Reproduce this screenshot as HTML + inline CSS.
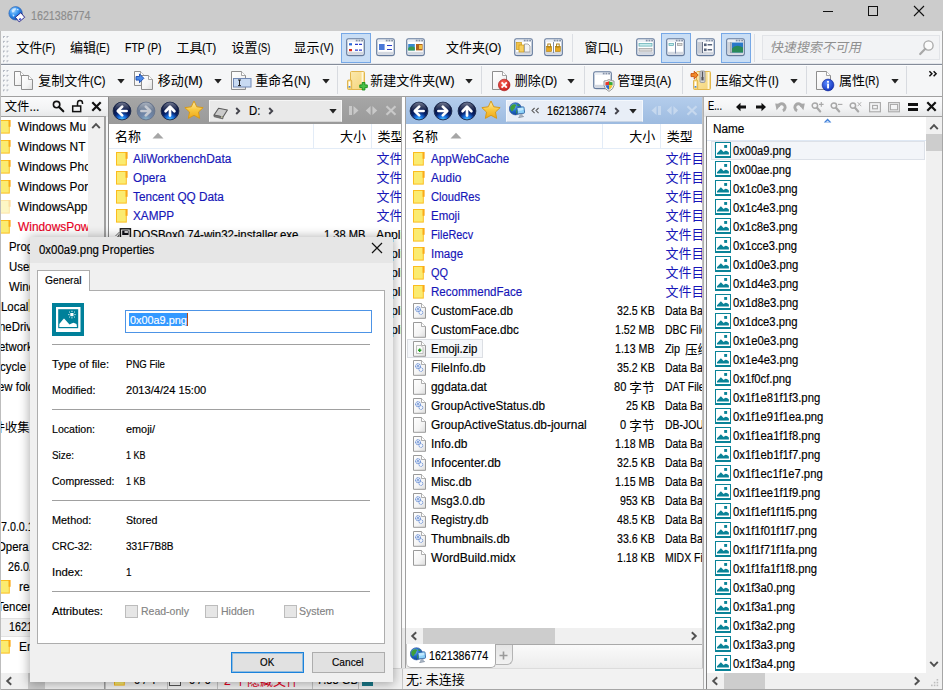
<!DOCTYPE html>
<html><head><meta charset="utf-8"><title>1621386774</title>
<style>
html,body{margin:0;padding:0;background:#fff;}
body{width:943px;height:690px;overflow:hidden;position:relative;font-family:"Liberation Sans",sans-serif;}
.a{position:absolute;}
.t{position:absolute;white-space:nowrap;transform-origin:0 0;line-height:normal;display:block;-webkit-text-stroke:0.16px currentColor;}
.g{font-family:"Liberation Sans","Noto Sans CJK SC",sans-serif;}
#root{position:absolute;left:0;top:0;width:943px;height:690px;overflow:hidden;background:#fff;}
</style></head><body>
<div id="root">
<svg width="0" height="0" style="position:absolute"><defs>
<radialGradient id="nb" cx="50%" cy="100%" r="75%"><stop offset="0" stop-color="#5ad2ff"/><stop offset="0.3" stop-color="#1872e4"/><stop offset="0.6" stop-color="#08226a"/><stop offset="1" stop-color="#06123c"/></radialGradient>
<radialGradient id="nbd" cx="50%" cy="100%" r="75%"><stop offset="0" stop-color="#8cb8cc"/><stop offset="0.4" stop-color="#7088ac"/><stop offset="1" stop-color="#69788f"/></radialGradient>
<linearGradient id="gl" x1="0" y1="0" x2="0" y2="1"><stop offset="0" stop-color="#fff" stop-opacity="0.55"/><stop offset="1" stop-color="#fff" stop-opacity="0.05"/></linearGradient>
<linearGradient id="star" x1="0" y1="0" x2="0" y2="1"><stop offset="0" stop-color="#fff0b0"/><stop offset="0.5" stop-color="#f8c840"/><stop offset="1" stop-color="#f0a818"/></linearGradient>
<linearGradient id="pg" x1="0" y1="0" x2="1" y2="1"><stop offset="0" stop-color="#ffffff"/><stop offset="0.6" stop-color="#f4f4f4"/><stop offset="1" stop-color="#dcdcdc"/></linearGradient>
<linearGradient id="fold" x1="0" y1="0" x2="1" y2="1"><stop offset="0" stop-color="#fbe9ae"/><stop offset="1" stop-color="#f5d478"/></linearGradient>
<radialGradient id="globe" cx="35%" cy="30%" r="75%"><stop offset="0" stop-color="#9fd4ff"/><stop offset="0.5" stop-color="#2f8ff0"/><stop offset="1" stop-color="#1450b0"/></radialGradient>
<radialGradient id="globe2" cx="35%" cy="30%" r="80%"><stop offset="0" stop-color="#79b8f4"/><stop offset="0.5" stop-color="#1f68c8"/><stop offset="1" stop-color="#0c3c8c"/></radialGradient>
<radialGradient id="redb" cx="40%" cy="35%" r="70%"><stop offset="0" stop-color="#ff6a5a"/><stop offset="1" stop-color="#c41818"/></radialGradient>
<radialGradient id="blub" cx="40%" cy="35%" r="70%"><stop offset="0" stop-color="#5a8aff"/><stop offset="1" stop-color="#1030b8"/></radialGradient>
<linearGradient id="win" x1="0" y1="0" x2="0" y2="1"><stop offset="0" stop-color="#ffffff"/><stop offset="1" stop-color="#e4e6ea"/></linearGradient>
</defs></svg><div class="a " style="left:0px;top:0px;width:943px;height:690px;background:#cccccc;"></div><div class="a " style="left:1px;top:31px;width:941px;height:658px;background:#f5f6f7;"></div><svg class="a" style="left:8px;top:5px;" width="18" height="18" viewBox="0 0 18 18"><circle cx="7.6" cy="8.3" r="6.7" fill="url(#globe)" stroke="#3a68b0" stroke-width="0.7"/><path d="M3.6,5.4 q1.2,-2.2 3.6,-2.4 q1.6,0.6 0.4,2 q-1,0.2 -1.2,1.4 q-1,1.4 -2.2,0.8 Z M8.6,3.4 q1.6,0.2 2.4,1.6 q-1.2,0.8 -2.2,-0.2 Z M4.4,9.6 q1.4,-0.6 2.2,0.6 q-0.4,1.4 -1.6,1.6 Z" fill="#dcefff" opacity="0.85"/><g transform="translate(12,12.3) rotate(-40)"><rect x="-3.6" y="-3" width="7.2" height="6" fill="#fdfdff" stroke="#28288a" stroke-width="0.9"/><rect x="-2.2" y="0.6" width="2" height="1.6" fill="#2838c8"/></g></svg><span class="t" style="left:30.5px;top:9.0px;font-size:12px;color:#8c8c8c;transform:scaleX(0.892);">1621386774</span><div class="a " style="left:823px;top:11px;width:10px;height:1px;background:#111;"></div><div class="a " style="left:868px;top:6px;width:10px;height:10px;border:1px solid #111;box-sizing:border-box;"></div><svg class="a" style="left:913px;top:5px;" width="12" height="12" viewBox="0 0 12 12"><path d="M1,1 L11,11 M11,1 L1,11" stroke="#111" stroke-width="1.1" fill="none"/></svg><div class="a " style="left:1px;top:31px;width:941px;height:33px;background:#f5f6f7;"></div><div class="a " style="left:1px;top:63px;width:941px;height:1px;background:#e2e5ea;"></div><div class="a " style="left:1px;top:64px;width:941px;height:1px;background:#858c99;"></div><div class="a " style="left:1px;top:65px;width:941px;height:1px;background:#fbfcfd;"></div><svg class="a" style="left:3px;top:35.6px;" width="7" height="30" viewBox="0 0 7 30"><rect x="0.0" y="0.00" width="1.9" height="1.9" fill="#b4b9c2"/><rect x="1.0" y="1.00" width="1.4" height="1.4" fill="#fff" opacity="0.9"/><rect x="3.6" y="0.00" width="1.9" height="1.9" fill="#b4b9c2"/><rect x="4.6" y="1.00" width="1.4" height="1.4" fill="#fff" opacity="0.9"/><rect x="0.0" y="4.85" width="1.9" height="1.9" fill="#b4b9c2"/><rect x="1.0" y="5.85" width="1.4" height="1.4" fill="#fff" opacity="0.9"/><rect x="3.6" y="4.85" width="1.9" height="1.9" fill="#b4b9c2"/><rect x="4.6" y="5.85" width="1.4" height="1.4" fill="#fff" opacity="0.9"/><rect x="0.0" y="9.70" width="1.9" height="1.9" fill="#b4b9c2"/><rect x="1.0" y="10.70" width="1.4" height="1.4" fill="#fff" opacity="0.9"/><rect x="3.6" y="9.70" width="1.9" height="1.9" fill="#b4b9c2"/><rect x="4.6" y="10.70" width="1.4" height="1.4" fill="#fff" opacity="0.9"/><rect x="0.0" y="14.55" width="1.9" height="1.9" fill="#b4b9c2"/><rect x="1.0" y="15.55" width="1.4" height="1.4" fill="#fff" opacity="0.9"/><rect x="3.6" y="14.55" width="1.9" height="1.9" fill="#b4b9c2"/><rect x="4.6" y="15.55" width="1.4" height="1.4" fill="#fff" opacity="0.9"/><rect x="0.0" y="19.40" width="1.9" height="1.9" fill="#b4b9c2"/><rect x="1.0" y="20.40" width="1.4" height="1.4" fill="#fff" opacity="0.9"/><rect x="3.6" y="19.40" width="1.9" height="1.9" fill="#b4b9c2"/><rect x="4.6" y="20.40" width="1.4" height="1.4" fill="#fff" opacity="0.9"/><rect x="0.0" y="24.25" width="1.9" height="1.9" fill="#b4b9c2"/><rect x="1.0" y="25.25" width="1.4" height="1.4" fill="#fff" opacity="0.9"/><rect x="3.6" y="24.25" width="1.9" height="1.9" fill="#b4b9c2"/><rect x="4.6" y="25.25" width="1.4" height="1.4" fill="#fff" opacity="0.9"/></svg><svg class="a" style="left:14px;top:37px" width="49" height="22" viewBox="14 37 49 22"><text class="g" x="16.3" y="52" font-size="13" fill="#000">文件</text></svg><span class="t" style="left:42.3px;top:40.9px;font-size:12px;color:#000;transform:scaleX(0.868);">(F)</span><svg class="a" style="left:68px;top:37px" width="49" height="22" viewBox="68 37 49 22"><text class="g" x="70.1" y="52" font-size="13" fill="#000">编辑</text></svg><span class="t" style="left:96.1px;top:40.9px;font-size:12px;color:#000;transform:scaleX(0.844);">(E)</span><span class="t" style="left:124.6px;top:40.9px;font-size:12px;color:#000;transform:scaleX(0.876);">FTP (P)</span><svg class="a" style="left:174px;top:37px" width="50" height="22" viewBox="174 37 50 22"><text class="g" x="176.4" y="52" font-size="13" fill="#000">工具</text></svg><span class="t" style="left:202.4px;top:40.9px;font-size:12px;color:#000;transform:scaleX(0.920);">(T)</span><svg class="a" style="left:229px;top:37px" width="48" height="22" viewBox="229 37 48 22"><text class="g" x="231.5" y="52" font-size="13" fill="#000">设置</text></svg><span class="t" style="left:257.5px;top:40.9px;font-size:12px;color:#000;transform:scaleX(0.769);">(S)</span><svg class="a" style="left:291px;top:37px" width="49" height="22" viewBox="291 37 49 22"><text class="g" x="293.5" y="52" font-size="13" fill="#000">显示</text></svg><span class="t" style="left:319.5px;top:40.9px;font-size:12px;color:#000;transform:scaleX(0.850);">(V)</span><svg class="a" style="left:444px;top:37px" width="65" height="22" viewBox="444 37 65 22"><text class="g" x="446.1" y="52" font-size="13" fill="#000">文件夹</text></svg><span class="t" style="left:485.1px;top:40.9px;font-size:12px;color:#000;transform:scaleX(0.947);">(O)</span><svg class="a" style="left:582px;top:37px" width="48" height="22" viewBox="582 37 48 22"><text class="g" x="584.4" y="52" font-size="13" fill="#000">窗口</text></svg><span class="t" style="left:610.4px;top:40.9px;font-size:12px;color:#000;transform:scaleX(0.859);">(L)</span><div class="a " style="left:341px;top:33px;width:30px;height:30px;background:#c9def5;border:1px solid #76a8e6;box-sizing:border-box;"></div><div class="a " style="left:661px;top:33px;width:30px;height:30px;background:#c9def5;border:1px solid #76a8e6;box-sizing:border-box;"></div><div class="a " style="left:721px;top:33px;width:30px;height:30px;background:#c9def5;border:1px solid #76a8e6;box-sizing:border-box;"></div><svg class="a" style="left:346px;top:38px;" width="19" height="19" viewBox="0 0 19 19"><rect x="1" y="2.2" width="17.4" height="16.2" rx="2.4" fill="#7c8798" opacity="0.45"/><rect x="0.75" y="0.75" width="17.5" height="16.7" rx="1.7" fill="#fff" stroke="#647a9c" stroke-width="1.25"/><rect x="1.6" y="1.6" width="15.8" height="2.3" fill="#eceff4"/><rect x="9.8" y="1.7" width="1.8" height="1.7" fill="#8592a8"/><rect x="12.5" y="1.7" width="1.8" height="1.7" fill="#8592a8"/><rect x="15.2" y="1.7" width="1.8" height="1.7" fill="#8592a8"/><rect x="1.6" y="13.8" width="15.8" height="2.4" fill="#d3d8e0"/><rect x="3" y="5.2" width="3" height="2.2" fill="#2a68d8"/><rect x="3" y="11" width="3" height="2.2" fill="#e02818"/><path d="M9,6.4 h3 M13,6.4 h3" stroke="#2a3ec8" stroke-width="1.2"/><path d="M9,12.2 h3 M13,12.2 h3" stroke="#2a3ec8" stroke-width="1.2"/></svg><svg class="a" style="left:376px;top:38px;" width="19" height="19" viewBox="0 0 19 19"><rect x="1" y="2.2" width="17.4" height="16.2" rx="2.4" fill="#7c8798" opacity="0.45"/><rect x="0.75" y="0.75" width="17.5" height="16.7" rx="1.7" fill="#fff" stroke="#647a9c" stroke-width="1.25"/><rect x="1.6" y="1.6" width="15.8" height="2.3" fill="#eceff4"/><rect x="9.8" y="1.7" width="1.8" height="1.7" fill="#8592a8"/><rect x="12.5" y="1.7" width="1.8" height="1.7" fill="#8592a8"/><rect x="15.2" y="1.7" width="1.8" height="1.7" fill="#8592a8"/><rect x="1.6" y="13.8" width="15.8" height="2.4" fill="#d3d8e0"/><rect x="3" y="6" width="5.6" height="6" fill="#4a78d8"/><path d="M11,7.5 h5 M11,11.5 h5" stroke="#2a3ec8" stroke-width="1.2"/></svg><svg class="a" style="left:406px;top:38px;" width="19" height="19" viewBox="0 0 19 19"><rect x="1" y="2.2" width="17.4" height="16.2" rx="2.4" fill="#7c8798" opacity="0.45"/><rect x="0.75" y="0.75" width="17.5" height="16.7" rx="1.7" fill="#fff" stroke="#647a9c" stroke-width="1.25"/><rect x="1.6" y="1.6" width="15.8" height="2.3" fill="#eceff4"/><rect x="9.8" y="1.7" width="1.8" height="1.7" fill="#8592a8"/><rect x="12.5" y="1.7" width="1.8" height="1.7" fill="#8592a8"/><rect x="15.2" y="1.7" width="1.8" height="1.7" fill="#8592a8"/><rect x="1.6" y="13.8" width="15.8" height="2.4" fill="#d3d8e0"/><rect x="2.2" y="6" width="6.6" height="6.4" fill="#3a8ad0"/><path d="M2.2,12.4 v-2.5 q3,-2.5 6.6,-0.5 v3 Z" fill="#3a9a50"/><rect x="10" y="6" width="6.6" height="6.4" fill="#b0601a"/><rect x="13" y="7" width="3" height="4" fill="#f0c040"/></svg><svg class="a" style="left:514px;top:38px;" width="19" height="19" viewBox="0 0 19 19"><rect x="1" y="2.2" width="17.4" height="16.2" rx="2.4" fill="#7c8798" opacity="0.45"/><rect x="0.75" y="0.75" width="17.5" height="16.7" rx="1.7" fill="#fff" stroke="#647a9c" stroke-width="1.25"/><rect x="1.6" y="1.6" width="15.8" height="2.3" fill="#eceff4"/><rect x="9.8" y="1.7" width="1.8" height="1.7" fill="#8592a8"/><rect x="12.5" y="1.7" width="1.8" height="1.7" fill="#8592a8"/><rect x="15.2" y="1.7" width="1.8" height="1.7" fill="#8592a8"/><rect x="1.6" y="13.8" width="15.8" height="2.4" fill="#d3d8e0"/><rect x="2.5" y="4.5" width="5" height="7" fill="#f2c24a" stroke="#c89818" stroke-width="0.7"/><rect x="5" y="7" width="5" height="7" fill="#f8d060" stroke="#c89818" stroke-width="0.7"/><path d="M10.5,6 h3.5 l2,2 v6 h-5.5 Z" fill="#f4f4f4" stroke="#8a8a8a" stroke-width="0.7"/></svg><svg class="a" style="left:544px;top:38px;" width="19" height="19" viewBox="0 0 19 19"><rect x="1" y="2.2" width="17.4" height="16.2" rx="2.4" fill="#7c8798" opacity="0.45"/><rect x="0.75" y="0.75" width="17.5" height="16.7" rx="1.7" fill="#fff" stroke="#647a9c" stroke-width="1.25"/><rect x="1.6" y="1.6" width="15.8" height="2.3" fill="#eceff4"/><rect x="9.8" y="1.7" width="1.8" height="1.7" fill="#8592a8"/><rect x="12.5" y="1.7" width="1.8" height="1.7" fill="#8592a8"/><rect x="15.2" y="1.7" width="1.8" height="1.7" fill="#8592a8"/><rect x="1.6" y="13.8" width="15.8" height="2.4" fill="#d3d8e0"/><path d="M9.5,4 v11" stroke="#7080a0" stroke-width="0.9"/><rect x="2.6" y="8.5" width="5" height="5" fill="#e8a820" stroke="#a87808" stroke-width="0.6"/><rect x="3.8" y="6" width="2.6" height="3" fill="none" stroke="#a87808" stroke-width="0.9"/><rect x="11.4" y="8.5" width="5" height="5" fill="#e8a820" stroke="#a87808" stroke-width="0.6"/><rect x="12.6" y="6" width="2.6" height="3" fill="none" stroke="#a87808" stroke-width="0.9"/></svg><div class="a " style="left:572px;top:34px;width:1px;height:28px;background:#dcdfe4;"></div><svg class="a" style="left:636px;top:38px;" width="19" height="19" viewBox="0 0 19 19"><rect x="1" y="2.2" width="17.4" height="16.2" rx="2.4" fill="#7c8798" opacity="0.45"/><rect x="0.75" y="0.75" width="17.5" height="16.7" rx="1.7" fill="#fff" stroke="#647a9c" stroke-width="1.25"/><rect x="1.6" y="1.6" width="15.8" height="2.3" fill="#eceff4"/><rect x="9.8" y="1.7" width="1.8" height="1.7" fill="#8592a8"/><rect x="12.5" y="1.7" width="1.8" height="1.7" fill="#8592a8"/><rect x="15.2" y="1.7" width="1.8" height="1.7" fill="#8592a8"/><rect x="1.6" y="13.8" width="15.8" height="2.4" fill="#d3d8e0"/><rect x="3" y="5.5" width="13" height="2.6" fill="#c8ecec" stroke="#58a8b0" stroke-width="0.7"/><rect x="3" y="10.5" width="13" height="2.6" fill="#dcdcdc" stroke="#9a9a9a" stroke-width="0.7"/></svg><svg class="a" style="left:666px;top:38px;" width="19" height="19" viewBox="0 0 19 19"><rect x="1" y="2.2" width="17.4" height="16.2" rx="2.4" fill="#7c8798" opacity="0.45"/><rect x="0.75" y="0.75" width="17.5" height="16.7" rx="1.7" fill="#fff" stroke="#647a9c" stroke-width="1.25"/><rect x="1.6" y="1.6" width="15.8" height="2.3" fill="#eceff4"/><rect x="9.8" y="1.7" width="1.8" height="1.7" fill="#8592a8"/><rect x="12.5" y="1.7" width="1.8" height="1.7" fill="#8592a8"/><rect x="15.2" y="1.7" width="1.8" height="1.7" fill="#8592a8"/><rect x="1.6" y="13.8" width="15.8" height="2.4" fill="#d3d8e0"/><path d="M9.5,4 v11.5" stroke="#7080a0" stroke-width="0.9"/><rect x="3" y="5.5" width="4.5" height="2" fill="#c8ecec" stroke="#58a8b0" stroke-width="0.7"/><rect x="11.5" y="5.5" width="4.5" height="2" fill="#dcdcdc" stroke="#9a9a9a" stroke-width="0.7"/></svg><svg class="a" style="left:696px;top:38px;" width="19" height="19" viewBox="0 0 19 19"><rect x="1" y="2.2" width="17.4" height="16.2" rx="2.4" fill="#7c8798" opacity="0.45"/><rect x="0.75" y="0.75" width="17.5" height="16.7" rx="1.7" fill="#fff" stroke="#647a9c" stroke-width="1.25"/><rect x="1.6" y="1.6" width="15.8" height="2.3" fill="#eceff4"/><rect x="9.8" y="1.7" width="1.8" height="1.7" fill="#8592a8"/><rect x="12.5" y="1.7" width="1.8" height="1.7" fill="#8592a8"/><rect x="15.2" y="1.7" width="1.8" height="1.7" fill="#8592a8"/><rect x="1.6" y="13.8" width="15.8" height="2.4" fill="#d3d8e0"/><rect x="2" y="4" width="4" height="11" fill="#c8ccd4"/><path d="M6.5,4 v11" stroke="#56627a" stroke-width="0.9"/><rect x="8" y="5.5" width="2.6" height="2.6" fill="#56627a"/><rect x="8" y="10.5" width="2.6" height="2.6" fill="#56627a"/><path d="M11.6,6.8 h4.5 M11.6,11.8 h4.5" stroke="#56627a" stroke-width="1.6"/></svg><svg class="a" style="left:726px;top:38px;" width="19" height="19" viewBox="0 0 19 19"><rect x="1" y="2.2" width="17.4" height="16.2" rx="2.4" fill="#7c8798" opacity="0.45"/><rect x="0.75" y="0.75" width="17.5" height="16.7" rx="1.7" fill="#fff" stroke="#647a9c" stroke-width="1.25"/><rect x="1.6" y="1.6" width="15.8" height="2.3" fill="#eceff4"/><rect x="9.8" y="1.7" width="1.8" height="1.7" fill="#8592a8"/><rect x="12.5" y="1.7" width="1.8" height="1.7" fill="#8592a8"/><rect x="15.2" y="1.7" width="1.8" height="1.7" fill="#8592a8"/><rect x="1.6" y="13.8" width="15.8" height="2.4" fill="#d3d8e0"/><rect x="2" y="4" width="2.6" height="11" fill="#d0d4da"/><path d="M5,4 v11" stroke="#56627a" stroke-width="0.9"/><rect x="6" y="4.5" width="11" height="10" fill="#2a78c8"/><path d="M6,14.5 v-4 q4,-5 11,-1 v5 Z" fill="#2a8a58"/></svg><div class="a " style="left:754px;top:34px;width:1px;height:28px;background:#dcdfe4;"></div><div class="a " style="left:762px;top:35px;width:178px;height:25px;background:#f2f3f5;border:1px solid #e2e4e8;box-sizing:border-box;"></div><svg class="a" style="left:760px;top:36px" width="120" height="24" viewBox="760 36 120 24"><g transform="translate(11.2,0) skewX(-12)"><text class="g" x="770" y="52.5" font-size="13" fill="#8f8f8f">快速搜索不可用</text></g></svg><svg class="a" style="left:918px;top:39px;" width="18" height="18" viewBox="0 0 18 18"><circle cx="10.5" cy="6.5" r="4.6" fill="#fbfbfb" stroke="#a8a8a8" stroke-width="1.3"/><path d="M7.3,9.8 L2.2,15" stroke="#a8a8a8" stroke-width="2.2" stroke-linecap="round"/></svg><svg class="a" style="left:3px;top:70px;" width="7" height="25" viewBox="0 0 7 25"><rect x="0.0" y="0.00" width="1.9" height="1.9" fill="#b4b9c2"/><rect x="1.0" y="1.00" width="1.4" height="1.4" fill="#fff" opacity="0.9"/><rect x="3.6" y="0.00" width="1.9" height="1.9" fill="#b4b9c2"/><rect x="4.6" y="1.00" width="1.4" height="1.4" fill="#fff" opacity="0.9"/><rect x="0.0" y="4.85" width="1.9" height="1.9" fill="#b4b9c2"/><rect x="1.0" y="5.85" width="1.4" height="1.4" fill="#fff" opacity="0.9"/><rect x="3.6" y="4.85" width="1.9" height="1.9" fill="#b4b9c2"/><rect x="4.6" y="5.85" width="1.4" height="1.4" fill="#fff" opacity="0.9"/><rect x="0.0" y="9.70" width="1.9" height="1.9" fill="#b4b9c2"/><rect x="1.0" y="10.70" width="1.4" height="1.4" fill="#fff" opacity="0.9"/><rect x="3.6" y="9.70" width="1.9" height="1.9" fill="#b4b9c2"/><rect x="4.6" y="10.70" width="1.4" height="1.4" fill="#fff" opacity="0.9"/><rect x="0.0" y="14.55" width="1.9" height="1.9" fill="#b4b9c2"/><rect x="1.0" y="15.55" width="1.4" height="1.4" fill="#fff" opacity="0.9"/><rect x="3.6" y="14.55" width="1.9" height="1.9" fill="#b4b9c2"/><rect x="4.6" y="15.55" width="1.4" height="1.4" fill="#fff" opacity="0.9"/><rect x="0.0" y="19.40" width="1.9" height="1.9" fill="#b4b9c2"/><rect x="1.0" y="20.40" width="1.4" height="1.4" fill="#fff" opacity="0.9"/><rect x="3.6" y="19.40" width="1.9" height="1.9" fill="#b4b9c2"/><rect x="4.6" y="20.40" width="1.4" height="1.4" fill="#fff" opacity="0.9"/></svg><svg class="a" style="left:14px;top:70px;" width="22" height="22" viewBox="0 0 22 22"><path d="M0.5,1.5 H6.5 L10.5,5.5 V15.5 H0.5 Z" fill="url(#pg)" stroke="#8e8e8e"/><path d="M6.5,1.5 V5.5 H10.5" fill="#fff" stroke="#8e8e8e" stroke-width="0.8"/><path d="M7.5,5.5 H14.5 L18.5,9.5 V19.5 H7.5 Z" fill="url(#pg)" stroke="#8e8e8e"/><path d="M14.5,5.5 V9.5 H18.5" fill="#fff" stroke="#8e8e8e" stroke-width="0.8"/></svg><svg class="a" style="left:36px;top:70px" width="77" height="22" viewBox="36 70 77 22"><text class="g" x="38.3" y="85" font-size="13" fill="#000">复制文件</text></svg><span class="t" style="left:90.3px;top:73.9px;font-size:12px;color:#000;transform:scaleX(0.925);">(C)</span><svg class="a" style="left:116.5px;top:78.5px;" width="8" height="5" viewBox="0 0 8 5"><path d="M0.3,0 H7.7 L4,4.4 Z" fill="#222"/></svg><svg class="a" style="left:133px;top:70px;" width="22" height="22" viewBox="0 0 22 22"><path d="M1.5,1.5 H7.5 L11.5,5.5 V15.5 H1.5 Z" fill="url(#pg)" stroke="#8e8e8e"/><path d="M7.5,1.5 V5.5 H11.5" fill="#fff" stroke="#8e8e8e" stroke-width="0.8"/><path d="M8.5,5.5 H15.5 L19.5,9.5 V19.5 H8.5 Z" fill="url(#pg)" stroke="#8e8e8e"/><path d="M15.5,5.5 V9.5 H19.5" fill="#fff" stroke="#8e8e8e" stroke-width="0.8"/><path d="M3,6.5 h3.5 v-2.6 l4.4,4.4 l-4.4,4.4 v-2.6 h-3.5 Z" fill="#4a8ae8" stroke="#1a4ab0" stroke-width="0.9"/></svg><svg class="a" style="left:155px;top:70px" width="54" height="22" viewBox="155 70 54 22"><text class="g" x="157.7" y="85" font-size="13" fill="#000">移动</text></svg><span class="t" style="left:183.7px;top:73.9px;font-size:12px;color:#000;transform:scaleX(1.045);">(M)</span><svg class="a" style="left:214px;top:78.5px;" width="8" height="5" viewBox="0 0 8 5"><path d="M0.3,0 H7.7 L4,4.4 Z" fill="#222"/></svg><svg class="a" style="left:230px;top:70px;" width="23" height="22" viewBox="0 0 23 22"><path d="M1.5,1.5 H11.5 L15.5,5.5 V19.5 H1.5 Z" fill="url(#pg)" stroke="#8e8e8e"/><path d="M11.5,1.5 V5.5 H15.5" fill="#fff" stroke="#8e8e8e" stroke-width="0.8"/><rect x="3.5" y="8.5" width="17.5" height="8.5" fill="#c8daf2" stroke="#7088b4"/><path d="M9.5,10 v5.6 M8,10 h3 M8,15.6 h3" stroke="#111" stroke-width="0.9" fill="none"/></svg><svg class="a" style="left:253px;top:70px" width="65" height="22" viewBox="253 70 65 22"><text class="g" x="255.2" y="85" font-size="13" fill="#000">重命名</text></svg><span class="t" style="left:294.2px;top:73.9px;font-size:12px;color:#000;transform:scaleX(0.979);">(N)</span><svg class="a" style="left:321.7px;top:78.5px;" width="8" height="5" viewBox="0 0 8 5"><path d="M0.3,0 H7.7 L4,4.4 Z" fill="#222"/></svg><div class="a " style="left:337px;top:66px;width:1px;height:28px;background:#d8dbe0;"></div><svg class="a" style="left:346.8px;top:70px;" width="22" height="22" viewBox="0 0 22 22"><rect x="3.5" y="1.5" width="14" height="18" rx="1" fill="url(#fold)" stroke="#e0b040" stroke-width="0.9"/><rect x="14.6" y="2" width="1.6" height="17" fill="#fff8dc"/><rect x="0.5" y="10" width="4.2" height="9.5" rx="1" fill="#f8d878" stroke="#d8a838" stroke-width="0.8"/><rect x="1.6" y="11.5" width="1.8" height="5.5" fill="#fff"/><rect x="1.6" y="16" width="1.8" height="1.6" fill="#4a8ae0"/><path d="M12.8,14.9 h2.4 v-2.4 h2.7 v2.4 h2.4 v2.7 h-2.4 v2.4 h-2.7 v-2.4 h-2.4 Z" fill="#48c048" stroke="#168a16" stroke-width="0.9"/></svg><svg class="a" style="left:368px;top:70px" width="94" height="22" viewBox="368 70 94 22"><text class="g" x="370.3" y="85" font-size="13" fill="#000">新建文件夹</text></svg><span class="t" style="left:435.3px;top:73.9px;font-size:12px;color:#000;transform:scaleX(1.015);">(W)</span><svg class="a" style="left:465.3px;top:78.5px;" width="8" height="5" viewBox="0 0 8 5"><path d="M0.3,0 H7.7 L4,4.4 Z" fill="#222"/></svg><div class="a " style="left:481px;top:66px;width:1px;height:28px;background:#d8dbe0;"></div><svg class="a" style="left:491px;top:70px;" width="22" height="22" viewBox="0 0 22 22"><path d="M1.5,1.5 H11.5 L15.5,5.5 V19.5 H1.5 Z" fill="url(#pg)" stroke="#8e8e8e"/><path d="M11.5,1.5 V5.5 H15.5" fill="#fff" stroke="#8e8e8e" stroke-width="0.8"/><circle cx="13.2" cy="15" r="5.8" fill="url(#redb)" stroke="#a01010" stroke-width="0.6"/><path d="M10.6,12.4 l5.2,5.2 M15.8,12.4 l-5.2,5.2" stroke="#fff" stroke-width="1.9"/></svg><svg class="a" style="left:512px;top:70px" width="52" height="22" viewBox="512 70 52 22"><text class="g" x="514.8" y="85" font-size="13" fill="#000">删除</text></svg><span class="t" style="left:540.8px;top:73.9px;font-size:12px;color:#000;transform:scaleX(0.973);">(D)</span><svg class="a" style="left:567.3px;top:78.5px;" width="8" height="5" viewBox="0 0 8 5"><path d="M0.3,0 H7.7 L4,4.4 Z" fill="#222"/></svg><div class="a " style="left:584px;top:66px;width:1px;height:28px;background:#d8dbe0;"></div><svg class="a" style="left:593px;top:71px;" width="19" height="19" viewBox="0 0 19 19"><rect x="1" y="2.2" width="17.4" height="16.2" rx="2.4" fill="#7c8798" opacity="0.45"/><rect x="0.75" y="0.75" width="17.5" height="16.7" rx="1.7" fill="#fff" stroke="#647a9c" stroke-width="1.25"/><rect x="1.6" y="1.6" width="15.8" height="2.3" fill="#eceff4"/><rect x="9.8" y="1.7" width="1.8" height="1.7" fill="#8592a8"/><rect x="12.5" y="1.7" width="1.8" height="1.7" fill="#8592a8"/><rect x="15.2" y="1.7" width="1.8" height="1.7" fill="#8592a8"/><rect x="1.6" y="13.8" width="15.8" height="2.4" fill="#d3d8e0"/></svg><svg class="a" style="left:603px;top:79px;" width="12" height="13" viewBox="0 0 12 13"><path d="M6,0.6 Q8.6,2 11,2 V6.4 Q10.6,10 6,12.4 Q1.4,10 1,6.4 V2 Q3.4,2 6,0.6 Z" fill="#f4f4f4" stroke="#8a8a8a" stroke-width="0.9"/><path d="M6,2.3 Q4,3.2 2.4,3.3 V6.3 H6 Z" fill="#e83828"/><path d="M6,2.3 Q8,3.2 9.6,3.3 V6.3 H6 Z" fill="#3aa83a"/><path d="M2.4,6.3 H6 V10.8 Q3,9 2.4,6.3 Z" fill="#2a68d0"/><path d="M9.6,6.3 H6 V10.8 Q9,9 9.6,6.3 Z" fill="#f4c428"/></svg><svg class="a" style="left:615px;top:70px" width="64" height="22" viewBox="615 70 64 22"><text class="g" x="617.3" y="85" font-size="13" fill="#000">管理员</text></svg><span class="t" style="left:656.3px;top:73.9px;font-size:12px;color:#000;transform:scaleX(0.957);">(A)</span><div class="a " style="left:682px;top:66px;width:1px;height:28px;background:#d8dbe0;"></div><svg class="a" style="left:690px;top:70px;" width="23" height="22" viewBox="0 0 23 22"><rect x="6.5" y="1.5" width="14" height="18" rx="1" fill="url(#fold)" stroke="#e0b040" stroke-width="0.9"/><rect x="17.6" y="2" width="1.6" height="17" fill="#fff8dc"/><rect x="3.5" y="10" width="4.2" height="9.5" rx="1" fill="#f8d878" stroke="#d8a838" stroke-width="0.8"/><rect x="4.6" y="11.5" width="1.8" height="5.5" fill="#fff"/><rect x="4.6" y="16" width="1.8" height="1.6" fill="#4a8ae0"/><rect x="10" y="1" width="5" height="11.5" rx="1.2" fill="#d4d4d8" stroke="#8a8a90" stroke-width="0.8"/><path d="M12.5,1.5 v6" stroke="#55555a" stroke-width="1.3"/><rect x="11.4" y="7" width="2.2" height="3.4" fill="#55555a"/><path d="M1,3.6 h3.2 v-2.4 l4,3.9 l-4,3.9 v-2.4 h-3.2 Z" fill="#f08a28" stroke="#c8500a" stroke-width="0.9"/></svg><svg class="a" style="left:713px;top:70px" width="72" height="22" viewBox="713 70 72 22"><text class="g" x="715.5" y="85" font-size="13" fill="#000">压缩文件</text></svg><span class="t" style="left:767.5px;top:73.9px;font-size:12px;color:#000;transform:scaleX(0.945);">(I)</span><svg class="a" style="left:789.6px;top:78.5px;" width="8" height="5" viewBox="0 0 8 5"><path d="M0.3,0 H7.7 L4,4.4 Z" fill="#222"/></svg><div class="a " style="left:806px;top:66px;width:1px;height:28px;background:#d8dbe0;"></div><svg class="a" style="left:815px;top:70px;" width="22" height="22" viewBox="0 0 22 22"><path d="M1.5,1.5 H11.5 L15.5,5.5 V19.5 H1.5 Z" fill="url(#pg)" stroke="#8e8e8e"/><path d="M11.5,1.5 V5.5 H15.5" fill="#fff" stroke="#8e8e8e" stroke-width="0.8"/><circle cx="13" cy="15" r="5.9" fill="url(#blub)" stroke="#0a2090" stroke-width="0.6"/><rect x="12.1" y="13.6" width="1.9" height="4.8" fill="#fff"/><circle cx="13" cy="11.8" r="1.1" fill="#fff"/></svg><svg class="a" style="left:837px;top:70px" width="50" height="22" viewBox="837 70 50 22"><text class="g" x="839" y="85" font-size="13" fill="#000">属性</text></svg><span class="t" style="left:865.0px;top:73.9px;font-size:12px;color:#000;transform:scaleX(0.840);">(R)</span><svg class="a" style="left:890.5px;top:78.5px;" width="8" height="5" viewBox="0 0 8 5"><path d="M0.3,0 H7.7 L4,4.4 Z" fill="#222"/></svg><div class="a " style="left:906px;top:66px;width:1px;height:28px;background:#d8dbe0;"></div><svg class="a" style="left:927.5px;top:70px;" width="11" height="8" viewBox="0 0 11 8"><path d="M1.4,1.2 l2.5,2.5 l-2.5,2.5 M5.6,1.2 l2.5,2.5 l-2.5,2.5" stroke="#111" stroke-width="1.5" fill="none"/></svg><div class="a " style="left:1px;top:96px;width:941px;height:1px;background:#a0a0a0;"></div><div class="a " style="left:1px;top:97px;width:107px;height:20px;background:linear-gradient(#fafafb 0%,#f3f4f5 55%,#e6e7e8 100%);"></div><svg class="a" style="left:2px;top:97px" width="44" height="21" viewBox="2 97 44 21"><text class="g" x="4.8" y="111.4" font-size="12.3" fill="#000">文件</text></svg><span class="t" style="left:29.4px;top:100.1px;font-size:12px;color:#000;transform:scaleX(1.000);">...</span><svg class="a" style="left:52px;top:100px;" width="13" height="13" viewBox="0 0 13 13"><circle cx="4.6" cy="4.6" r="3.2" fill="none" stroke="#111" stroke-width="1.6"/><path d="M7,7 L11.3,11.3" stroke="#111" stroke-width="2.1" stroke-linecap="round"/></svg><svg class="a" style="left:71px;top:99px;" width="13" height="14" viewBox="0 0 13 14"><rect x="1.7" y="7" width="8" height="5.6" fill="none" stroke="#111" stroke-width="1.5"/><path d="M6.5,7 V4.2 Q6.5,1.6 9,1.6 Q11.5,1.6 11.5,4.2 V5" fill="none" stroke="#111" stroke-width="1.5"/></svg><svg class="a" style="left:91px;top:101px;" width="11" height="11" viewBox="0 0 11 11"><path d="M1.3,1.3 L9.7,9.7 M9.7,1.3 L1.3,9.7" stroke="#111" stroke-width="2.2"/></svg><div class="a" style="left:1px;top:116px;width:105px;height:574px;overflow:hidden;"><div class="a" style="left:-1px;top:-116px"><div class="a " style="left:1px;top:116px;width:105px;height:574px;background:#fff;border:1px solid #a0a0a0;border-left:none;box-sizing:border-box;"></div><svg class="a" style="left:-1px;top:120.19999999999999px;" width="12" height="14" viewBox="0 0 12 14"><g><rect x="0" y="0" width="10.8" height="13.6" fill="#fbbd1f"/><rect x="1" y="1" width="8.8" height="11.6" fill="#fbeb70"/><rect x="9.6" y="0" width="2" height="6.8" fill="#fbaa18"/></g></svg><span class="t" style="left:17.7px;top:119.7px;font-size:12px;color:#000;transform:scaleX(0.992);">Windows Mu</span><svg class="a" style="left:-1px;top:140.2px;" width="12" height="14" viewBox="0 0 12 14"><g><rect x="0" y="0" width="10.8" height="13.6" fill="#fbbd1f"/><rect x="1" y="1" width="8.8" height="11.6" fill="#fbeb70"/><rect x="9.6" y="0" width="2" height="6.8" fill="#fbaa18"/></g></svg><span class="t" style="left:17.7px;top:139.7px;font-size:12px;color:#000;transform:scaleX(0.992);">Windows NT</span><svg class="a" style="left:-1px;top:160.2px;" width="12" height="14" viewBox="0 0 12 14"><g><rect x="0" y="0" width="10.8" height="13.6" fill="#fbbd1f"/><rect x="1" y="1" width="8.8" height="11.6" fill="#fbeb70"/><rect x="9.6" y="0" width="2" height="6.8" fill="#fbaa18"/></g></svg><span class="t" style="left:17.7px;top:159.7px;font-size:12px;color:#000;transform:scaleX(0.992);">Windows Pho</span><svg class="a" style="left:-1px;top:180.2px;" width="12" height="14" viewBox="0 0 12 14"><g><rect x="0" y="0" width="10.8" height="13.6" fill="#fbbd1f"/><rect x="1" y="1" width="8.8" height="11.6" fill="#fbeb70"/><rect x="9.6" y="0" width="2" height="6.8" fill="#fbaa18"/></g></svg><span class="t" style="left:17.7px;top:179.7px;font-size:12px;color:#000;transform:scaleX(0.992);">Windows Por</span><svg class="a" style="left:-1px;top:200.2px;" width="12" height="14" viewBox="0 0 12 14"><g opacity="0.4"><rect x="0" y="0" width="10.8" height="13.6" fill="#fbbd1f"/><rect x="1" y="1" width="8.8" height="11.6" fill="#fbeb70"/><rect x="9.6" y="0" width="2" height="6.8" fill="#fbaa18"/></g></svg><span class="t" style="left:17.7px;top:199.7px;font-size:12px;color:#000;transform:scaleX(0.992);">WindowsApp</span><svg class="a" style="left:-1px;top:220.2px;" width="12" height="14" viewBox="0 0 12 14"><g><rect x="0" y="0" width="10.8" height="13.6" fill="#fbbd1f"/><rect x="1" y="1" width="8.8" height="11.6" fill="#fbeb70"/><rect x="9.6" y="0" width="2" height="6.8" fill="#fbaa18"/></g></svg><span class="t" style="left:17.7px;top:219.7px;font-size:12px;color:#e6001e;transform:scaleX(0.992);">WindowsPow</span><span class="t" style="left:8.5px;top:239.7px;font-size:12px;color:#000;transform:scaleX(0.950);">Program</span><span class="t" style="left:8.5px;top:259.7px;font-size:12px;color:#000;transform:scaleX(0.950);">Users</span><span class="t" style="left:9.0px;top:279.7px;font-size:12px;color:#000;transform:scaleX(0.950);">Windows</span><span class="t" style="left:0.8px;top:299.7px;font-size:12px;color:#000;transform:scaleX(0.950);">Local Disk</span><span class="t" style="left:-1.0px;top:319.7px;font-size:12px;color:#000;transform:scaleX(0.950);">neDrive</span><span class="t" style="left:-1.5px;top:339.7px;font-size:12px;color:#000;transform:scaleX(0.950);">etwork</span><span class="t" style="left:-0.5px;top:359.7px;font-size:12px;color:#000;transform:scaleX(0.950);">cycle Bin</span><span class="t" style="left:-2.0px;top:379.7px;font-size:12px;color:#000;transform:scaleX(0.950);">ew folder</span><svg class="a" style="left:-9px;top:417px" width="46" height="21" viewBox="-9 417 46 21"><text class="g" x="-7.3" y="431.5" font-size="12.3" fill="#000">件收集</text></svg><span class="t" style="left:0.8px;top:519.7px;font-size:12px;color:#000;transform:scaleX(0.892);">7.0.0.1</span><span class="t" style="left:-3.5px;top:539.7px;font-size:12px;color:#000;transform:scaleX(0.950);">Opera</span><span class="t" style="left:8.2px;top:559.7px;font-size:12px;color:#000;transform:scaleX(0.892);">26.0.1656</span><svg class="a" style="left:-1px;top:580.2px;" width="12" height="14" viewBox="0 0 12 14"><g><rect x="0" y="0" width="10.8" height="13.6" fill="#fbbd1f"/><rect x="1" y="1" width="8.8" height="11.6" fill="#fbeb70"/><rect x="9.6" y="0" width="2" height="6.8" fill="#fbaa18"/></g></svg><span class="t" style="left:18.6px;top:579.7px;font-size:12px;color:#000;transform:scaleX(0.992);">resources</span><span class="t" style="left:-3.0px;top:599.7px;font-size:12px;color:#000;transform:scaleX(0.950);">Tencent</span><div class="a " style="left:1px;top:617.5px;width:104px;height:19px;background:#f1f1f1;border-top:1px solid #e2e2e2;border-bottom:1px solid #e2e2e2;box-sizing:border-box;"></div><span class="t" style="left:8.8px;top:619.7px;font-size:12px;color:#000;transform:scaleX(0.892);">1621386774</span><svg class="a" style="left:-1px;top:640.2px;" width="12" height="14" viewBox="0 0 12 14"><g><rect x="0" y="0" width="10.8" height="13.6" fill="#fbbd1f"/><rect x="1" y="1" width="8.8" height="11.6" fill="#fbeb70"/><rect x="9.6" y="0" width="2" height="6.8" fill="#fbaa18"/></g></svg><span class="t" style="left:18.6px;top:639.7px;font-size:12px;color:#000;transform:scaleX(0.992);">Emoji</span><div class="a " style="left:28px;top:299px;width:3px;height:13px;background:#fbe9a0;"></div><div class="a " style="left:88px;top:117px;width:16px;height:556px;background:#f0f0f0;"></div><svg class="a" style="left:91px;top:122px;" width="10" height="8" viewBox="0 0 10 8"><path d="M1.2,6.2 L5,2.2 L8.8,6.2" stroke="#505050" stroke-width="1.9" fill="none"/></svg><div class="a " style="left:1px;top:673px;width:104px;height:16px;background:#f0f0f0;"></div><svg class="a" style="left:5px;top:676px;" width="8" height="10" viewBox="0 0 8 10"><path d="M6.2,1.2 L2.2,5 L6.2,8.8" stroke="#505050" stroke-width="1.9" fill="none"/></svg><div class="a " style="left:28px;top:673px;width:17px;height:16px;background:#cdcdcd;"></div></div></div><div class="a " style="left:88px;top:117px;width:16px;height:556px;background:#f0f0f0;"></div><svg class="a" style="left:91px;top:122px;" width="10" height="8" viewBox="0 0 10 8"><path d="M1.2,6.2 L5,2.2 L8.8,6.2" stroke="#505050" stroke-width="1.9" fill="none"/></svg><div class="a " style="left:104px;top:116px;width:1px;height:574px;background:#a0a0a0;"></div><div class="a" style="left:109px;top:97px;width:293px;height:593px;overflow:hidden;"><div class="a" style="left:-109px;top:-97px"><div class="a " style="left:109px;top:97px;width:293px;height:27px;background:linear-gradient(#a6a6a6,#9a9a9a);"></div><div class="a " style="left:109px;top:97px;width:293px;height:1px;background:#adadad;"></div><div class="a " style="left:109px;top:124px;width:293px;height:566px;background:#fff;"></div><svg class="a" style="left:112.0px;top:100.7px;" width="20" height="20" viewBox="0 0 20 20"><g transform="translate(10,10)"><circle r="8.9" fill="url(#nb)" stroke="#1a2748" stroke-width="0.9"/><path d="M-7.8,-0.6 A7.8,7.8 0 0 1 7.8,-0.6 Q0,-3.2 -7.8,-0.6 Z" fill="url(#gl)" opacity="0.75"/><g transform="rotate(0)" fill="none" stroke="#fff" stroke-width="2.7" stroke-linecap="round" stroke-linejoin="round"><path d="M0.2,-4.4 L-4.2,0 L0.2,4.4"/><path d="M-3.6,0 H4.6"/></g></g></svg><svg class="a" style="left:136.0px;top:100.7px;" width="20" height="20" viewBox="0 0 20 20"><g transform="translate(10,10)"><circle r="8.9" fill="url(#nbd)" stroke="#66748c" stroke-width="0.9"/><path d="M-7.8,-0.6 A7.8,7.8 0 0 1 7.8,-0.6 Q0,-3.2 -7.8,-0.6 Z" fill="url(#gl)" opacity="0.75"/><g transform="rotate(180)" fill="none" stroke="#c6cad2" stroke-width="2.7" stroke-linecap="round" stroke-linejoin="round"><path d="M0.2,-4.4 L-4.2,0 L0.2,4.4"/><path d="M-3.6,0 H4.6"/></g></g></svg><svg class="a" style="left:160.1px;top:100.7px;" width="20" height="20" viewBox="0 0 20 20"><g transform="translate(10,10)"><circle r="8.9" fill="url(#nb)" stroke="#1a2748" stroke-width="0.9"/><path d="M-7.8,-0.6 A7.8,7.8 0 0 1 7.8,-0.6 Q0,-3.2 -7.8,-0.6 Z" fill="url(#gl)" opacity="0.75"/><g transform="rotate(90)" fill="none" stroke="#fff" stroke-width="2.7" stroke-linecap="round" stroke-linejoin="round"><path d="M0.2,-4.4 L-4.2,0 L0.2,4.4"/><path d="M-3.6,0 H4.6"/></g></g></svg><svg class="a" style="left:184.1px;top:100px;" width="20" height="20" viewBox="0 0 20 20"><polygon points="10.00,1.00 12.76,6.80 19.13,7.63 14.47,12.05 15.64,18.37 10.00,15.30 4.36,18.37 5.53,12.05 0.87,7.63 7.24,6.80" fill="url(#star)" stroke="#d89a18" stroke-width="1" stroke-linejoin="round"/></svg><div class="a " style="left:209px;top:100px;width:133px;height:22px;background:#e9e9e9;border:1px solid #f6f6f6;box-sizing:border-box;border-bottom-color:#d4d4d4;"></div><svg class="a" style="left:212.6px;top:105.6px;" width="16" height="14" viewBox="0 0 16 14"><path d="M1,9 L5.6,2.2 L14.4,4 L10,11 Z" fill="#cbcbcb" stroke="#5c5c5c" stroke-width="1.1" stroke-linejoin="round"/><path d="M1,9 L10,11 L9.9,12.9 L1,10.7 Z" fill="#787878" stroke="#5c5c5c" stroke-width="0.7"/><circle cx="8.8" cy="10.9" r="0.75" fill="#f4f4c0"/></svg><svg class="a" style="left:235.4px;top:106.6px;" width="6" height="9" viewBox="0 0 6 9"><path d="M1.2,1 L4.2,4 L1.2,7" stroke="#44444c" stroke-width="1.9" fill="none"/></svg><span class="t" style="left:249.0px;top:103.5px;font-size:12px;color:#000;transform:scaleX(0.950);">D:</span><svg class="a" style="left:268.4px;top:106.6px;" width="6" height="9" viewBox="0 0 6 9"><path d="M1.2,1 L4.2,4 L1.2,7" stroke="#44444c" stroke-width="1.9" fill="none"/></svg><svg class="a" style="left:328.6px;top:108.7px;" width="8" height="5" viewBox="0 0 8 5"><path d="M0.3,0 H7.7 L4,4.4 Z" fill="#222"/></svg><svg class="a" style="left:348px;top:105px;" width="12" height="11" viewBox="0 0 12 11"><rect x="1" y="1" width="3" height="9" fill="#c9c9c9"/><path d="M5.5,1 L10.5,5.5 L5.5,10 Z" fill="#c9c9c9"/></svg><svg class="a" style="left:365px;top:105px;" width="13" height="11" viewBox="0 0 13 11"><path d="M5.6,1 L0.8,5.5 L5.6,10 Z M7.4,1 L12.2,5.5 L7.4,10 Z" fill="#c9c9c9"/></svg><svg class="a" style="left:385px;top:105px;" width="12" height="11" viewBox="0 0 12 11"><path d="M1.5,1.2 L10.5,9.8 M10.5,1.2 L1.5,9.8" stroke="#c9c9c9" stroke-width="2.2"/></svg><div class="a " style="left:109px;top:148px;width:293px;height:1px;background:#e3ecf7;"></div><div class="a " style="left:313px;top:124px;width:1px;height:24px;background:#e3ecf7;"></div><div class="a " style="left:371px;top:124px;width:1px;height:24px;background:#e3ecf7;"></div><svg class="a" style="left:113px;top:125px" width="36" height="22" viewBox="113 125 36 22"><text class="g" x="115" y="140.7" font-size="13" fill="#000">名称</text></svg><svg class="a" style="left:152px;top:132px;" width="12" height="7" viewBox="0 0 12 7"><path d="M0.5,6.5 L6,0.8 L11.5,6.5 Z" fill="#a6a6a6"/></svg><svg class="a" style="left:337px;top:125px" width="36" height="22" viewBox="337 125 36 22"><text class="g" x="339.9" y="140.7" font-size="13" fill="#000">大小</text></svg><svg class="a" style="left:375px;top:125px" width="36" height="22" viewBox="375 125 36 22"><text class="g" x="377.6" y="140.7" font-size="13" fill="#000">类型</text></svg><svg class="a" style="left:116.1px;top:151.9px;" width="12" height="14" viewBox="0 0 12 14"><g><rect x="0" y="0" width="10.8" height="13.6" fill="#fbbd1f"/><rect x="1" y="1" width="8.8" height="11.6" fill="#fbeb70"/><rect x="9.6" y="0" width="2" height="6.8" fill="#fbaa18"/></g></svg><span class="t" style="left:133.1px;top:151.8px;font-size:12px;color:#1616b8;transform:scaleX(0.992);">AliWorkbenchData</span><svg class="a" style="left:374px;top:148px" width="49" height="22" viewBox="374 148 49 22"><text class="g" x="376.4" y="163.4" font-size="13" fill="#1616b8">文件夹</text></svg><svg class="a" style="left:116.1px;top:170.9px;" width="12" height="14" viewBox="0 0 12 14"><g><rect x="0" y="0" width="10.8" height="13.6" fill="#fbbd1f"/><rect x="1" y="1" width="8.8" height="11.6" fill="#fbeb70"/><rect x="9.6" y="0" width="2" height="6.8" fill="#fbaa18"/></g></svg><span class="t" style="left:133.1px;top:170.8px;font-size:12px;color:#1616b8;transform:scaleX(0.980);">Opera</span><svg class="a" style="left:374px;top:167px" width="49" height="22" viewBox="374 167 49 22"><text class="g" x="376.4" y="182.4" font-size="13" fill="#1616b8">文件夹</text></svg><svg class="a" style="left:116.1px;top:189.9px;" width="12" height="14" viewBox="0 0 12 14"><g><rect x="0" y="0" width="10.8" height="13.6" fill="#fbbd1f"/><rect x="1" y="1" width="8.8" height="11.6" fill="#fbeb70"/><rect x="9.6" y="0" width="2" height="6.8" fill="#fbaa18"/></g></svg><span class="t" style="left:133.1px;top:189.8px;font-size:12px;color:#1616b8;transform:scaleX(0.980);">Tencent QQ Data</span><svg class="a" style="left:374px;top:186px" width="49" height="22" viewBox="374 186 49 22"><text class="g" x="376.4" y="201.4" font-size="13" fill="#1616b8">文件夹</text></svg><svg class="a" style="left:116.1px;top:208.9px;" width="12" height="14" viewBox="0 0 12 14"><g><rect x="0" y="0" width="10.8" height="13.6" fill="#fbbd1f"/><rect x="1" y="1" width="8.8" height="11.6" fill="#fbeb70"/><rect x="9.6" y="0" width="2" height="6.8" fill="#fbaa18"/></g></svg><span class="t" style="left:133.1px;top:208.8px;font-size:12px;color:#1616b8;transform:scaleX(0.980);">XAMPP</span><svg class="a" style="left:374px;top:205px" width="49" height="22" viewBox="374 205 49 22"><text class="g" x="376.4" y="220.4" font-size="13" fill="#1616b8">文件夹</text></svg><svg class="a" style="left:115px;top:227.8px;" width="17" height="15" viewBox="0 0 17 15"><rect x="5.4" y="0.8" width="10" height="9" fill="#fff" stroke="#1a1a1a" stroke-width="1.5"/><rect x="7.2" y="2.4" width="6.4" height="4.6" fill="#101018"/><rect x="9.5" y="3.2" width="3.4" height="1.6" fill="#fff"/><rect x="4.6" y="10.4" width="11.6" height="4" fill="#d0d0d0" stroke="#333" stroke-width="0.9"/><path d="M0.5,8 l4,-4 M1.2,10.2 l3.4,-3.4 M2.6,12.4 l1,-5.8" stroke="#555" stroke-width="0.9"/><rect x="6" y="11.6" width="2" height="1.6" fill="#3c3"/></svg><span class="t" style="left:133.1px;top:227.8px;font-size:12px;color:#000;transform:scaleX(0.958);">DOSBox0.74-win32-installer.exe</span><span class="t" style="left:324.4px;top:227.8px;font-size:12px;color:#000;transform:scaleX(0.930);">1.38 MB</span><span class="t" style="left:376.4px;top:227.8px;font-size:12px;color:#000;transform:scaleX(1.020);">Application</span><svg class="a" style="left:115px;top:246.8px;" width="17" height="15" viewBox="0 0 17 15"><rect x="5.4" y="0.8" width="10" height="9" fill="#fff" stroke="#1a1a1a" stroke-width="1.5"/><rect x="7.2" y="2.4" width="6.4" height="4.6" fill="#101018"/><rect x="9.5" y="3.2" width="3.4" height="1.6" fill="#fff"/><rect x="4.6" y="10.4" width="11.6" height="4" fill="#d0d0d0" stroke="#333" stroke-width="0.9"/><path d="M0.5,8 l4,-4 M1.2,10.2 l3.4,-3.4 M2.6,12.4 l1,-5.8" stroke="#555" stroke-width="0.9"/><rect x="6" y="11.6" width="2" height="1.6" fill="#3c3"/></svg><span class="t" style="left:133.1px;top:246.8px;font-size:12px;color:#000;transform:scaleX(0.980);">setup.exe</span><span class="t" style="left:324.4px;top:246.8px;font-size:12px;color:#000;transform:scaleX(0.930);">1.00 MB</span><span class="t" style="left:376.4px;top:246.8px;font-size:12px;color:#000;transform:scaleX(1.020);">Application</span><svg class="a" style="left:115px;top:265.8px;" width="17" height="15" viewBox="0 0 17 15"><rect x="5.4" y="0.8" width="10" height="9" fill="#fff" stroke="#1a1a1a" stroke-width="1.5"/><rect x="7.2" y="2.4" width="6.4" height="4.6" fill="#101018"/><rect x="9.5" y="3.2" width="3.4" height="1.6" fill="#fff"/><rect x="4.6" y="10.4" width="11.6" height="4" fill="#d0d0d0" stroke="#333" stroke-width="0.9"/><path d="M0.5,8 l4,-4 M1.2,10.2 l3.4,-3.4 M2.6,12.4 l1,-5.8" stroke="#555" stroke-width="0.9"/><rect x="6" y="11.6" width="2" height="1.6" fill="#3c3"/></svg><span class="t" style="left:133.1px;top:265.8px;font-size:12px;color:#000;transform:scaleX(0.980);">setup.exe</span><span class="t" style="left:324.4px;top:265.8px;font-size:12px;color:#000;transform:scaleX(0.930);">1.00 MB</span><span class="t" style="left:376.4px;top:265.8px;font-size:12px;color:#000;transform:scaleX(1.020);">Application</span><svg class="a" style="left:115px;top:284.8px;" width="17" height="15" viewBox="0 0 17 15"><rect x="5.4" y="0.8" width="10" height="9" fill="#fff" stroke="#1a1a1a" stroke-width="1.5"/><rect x="7.2" y="2.4" width="6.4" height="4.6" fill="#101018"/><rect x="9.5" y="3.2" width="3.4" height="1.6" fill="#fff"/><rect x="4.6" y="10.4" width="11.6" height="4" fill="#d0d0d0" stroke="#333" stroke-width="0.9"/><path d="M0.5,8 l4,-4 M1.2,10.2 l3.4,-3.4 M2.6,12.4 l1,-5.8" stroke="#555" stroke-width="0.9"/><rect x="6" y="11.6" width="2" height="1.6" fill="#3c3"/></svg><span class="t" style="left:133.1px;top:284.8px;font-size:12px;color:#000;transform:scaleX(0.980);">setup.exe</span><span class="t" style="left:324.4px;top:284.8px;font-size:12px;color:#000;transform:scaleX(0.930);">1.00 MB</span><span class="t" style="left:376.4px;top:284.8px;font-size:12px;color:#000;transform:scaleX(1.020);">Application</span><svg class="a" style="left:115px;top:303.8px;" width="17" height="15" viewBox="0 0 17 15"><rect x="5.4" y="0.8" width="10" height="9" fill="#fff" stroke="#1a1a1a" stroke-width="1.5"/><rect x="7.2" y="2.4" width="6.4" height="4.6" fill="#101018"/><rect x="9.5" y="3.2" width="3.4" height="1.6" fill="#fff"/><rect x="4.6" y="10.4" width="11.6" height="4" fill="#d0d0d0" stroke="#333" stroke-width="0.9"/><path d="M0.5,8 l4,-4 M1.2,10.2 l3.4,-3.4 M2.6,12.4 l1,-5.8" stroke="#555" stroke-width="0.9"/><rect x="6" y="11.6" width="2" height="1.6" fill="#3c3"/></svg><span class="t" style="left:133.1px;top:303.8px;font-size:12px;color:#000;transform:scaleX(0.980);">setup.exe</span><span class="t" style="left:324.4px;top:303.8px;font-size:12px;color:#000;transform:scaleX(0.930);">1.00 MB</span><span class="t" style="left:376.4px;top:303.8px;font-size:12px;color:#000;transform:scaleX(1.020);">Application</span><svg class="a" style="left:115px;top:322.8px;" width="17" height="15" viewBox="0 0 17 15"><rect x="5.4" y="0.8" width="10" height="9" fill="#fff" stroke="#1a1a1a" stroke-width="1.5"/><rect x="7.2" y="2.4" width="6.4" height="4.6" fill="#101018"/><rect x="9.5" y="3.2" width="3.4" height="1.6" fill="#fff"/><rect x="4.6" y="10.4" width="11.6" height="4" fill="#d0d0d0" stroke="#333" stroke-width="0.9"/><path d="M0.5,8 l4,-4 M1.2,10.2 l3.4,-3.4 M2.6,12.4 l1,-5.8" stroke="#555" stroke-width="0.9"/><rect x="6" y="11.6" width="2" height="1.6" fill="#3c3"/></svg><span class="t" style="left:133.1px;top:322.8px;font-size:12px;color:#000;transform:scaleX(0.980);">setup.exe</span><span class="t" style="left:324.4px;top:322.8px;font-size:12px;color:#000;transform:scaleX(0.930);">1.00 MB</span><span class="t" style="left:376.4px;top:322.8px;font-size:12px;color:#000;transform:scaleX(1.020);">Application</span><div class="a " style="left:401px;top:97px;width:1px;height:593px;background:#a8a8a8;"></div></div></div><div class="a " style="left:108px;top:97px;width:1px;height:593px;background:#8a8a8a;"></div><div class="a " style="left:402px;top:97px;width:3px;height:593px;background:#fdfdfd;"></div><div class="a " style="left:402px;top:628px;width:3px;height:62px;background:#e9e9e9;"></div><div class="a" style="left:405px;top:97px;width:298px;height:571px;overflow:hidden;"><div class="a" style="left:-405px;top:-97px"><div class="a " style="left:405px;top:97px;width:298px;height:27px;background:linear-gradient(#b4cdec,#9dbbe0);"></div><div class="a " style="left:405px;top:97px;width:298px;height:1px;background:#bcd2ee;"></div><div class="a " style="left:405px;top:124px;width:298px;height:504px;background:#fff;"></div><svg class="a" style="left:408.8px;top:100.7px;" width="20" height="20" viewBox="0 0 20 20"><g transform="translate(10,10)"><circle r="8.9" fill="url(#nb)" stroke="#1a2748" stroke-width="0.9"/><path d="M-7.8,-0.6 A7.8,7.8 0 0 1 7.8,-0.6 Q0,-3.2 -7.8,-0.6 Z" fill="url(#gl)" opacity="0.75"/><g transform="rotate(0)" fill="none" stroke="#fff" stroke-width="2.7" stroke-linecap="round" stroke-linejoin="round"><path d="M0.2,-4.4 L-4.2,0 L0.2,4.4"/><path d="M-3.6,0 H4.6"/></g></g></svg><svg class="a" style="left:432.9px;top:100.7px;" width="20" height="20" viewBox="0 0 20 20"><g transform="translate(10,10)"><circle r="8.9" fill="url(#nb)" stroke="#1a2748" stroke-width="0.9"/><path d="M-7.8,-0.6 A7.8,7.8 0 0 1 7.8,-0.6 Q0,-3.2 -7.8,-0.6 Z" fill="url(#gl)" opacity="0.75"/><g transform="rotate(180)" fill="none" stroke="#fff" stroke-width="2.7" stroke-linecap="round" stroke-linejoin="round"><path d="M0.2,-4.4 L-4.2,0 L0.2,4.4"/><path d="M-3.6,0 H4.6"/></g></g></svg><svg class="a" style="left:457.2px;top:100.7px;" width="20" height="20" viewBox="0 0 20 20"><g transform="translate(10,10)"><circle r="8.9" fill="url(#nb)" stroke="#1a2748" stroke-width="0.9"/><path d="M-7.8,-0.6 A7.8,7.8 0 0 1 7.8,-0.6 Q0,-3.2 -7.8,-0.6 Z" fill="url(#gl)" opacity="0.75"/><g transform="rotate(90)" fill="none" stroke="#fff" stroke-width="2.7" stroke-linecap="round" stroke-linejoin="round"><path d="M0.2,-4.4 L-4.2,0 L0.2,4.4"/><path d="M-3.6,0 H4.6"/></g></g></svg><svg class="a" style="left:480.8px;top:100px;" width="20" height="20" viewBox="0 0 20 20"><polygon points="10.00,1.00 12.76,6.80 19.13,7.63 14.47,12.05 15.64,18.37 10.00,15.30 4.36,18.37 5.53,12.05 0.87,7.63 7.24,6.80" fill="url(#star)" stroke="#d89a18" stroke-width="1" stroke-linejoin="round"/></svg><div class="a " style="left:506px;top:100px;width:137px;height:22px;background:#e8eef7;border:1px solid #f4f8fd;box-sizing:border-box;border-bottom-color:#c8d4e4;"></div><svg class="a" style="left:509px;top:102.3px;" width="16" height="16.5" viewBox="0 0 16 16.5"><circle cx="6.4" cy="6.8" r="6.1" fill="url(#globe2)" stroke="#1c4a98" stroke-width="0.6"/><path d="M2.4,3.6 q1.8,-2 4.2,-1.2 q1.2,1.4 -0.6,2.6 q0.4,1.6 -1.4,2.2 q-0.4,2 -1.8,2.2 q-1.6,-1.6 -1.6,-3.6 q0.2,-1.2 1.2,-2.2 Z M7.4,8 q1.6,-0.8 2.4,0.6 q-0.2,2.2 -2,3.4 q-1.2,-1.6 -0.4,-4 Z M8.4,2 q1.6,0.4 2.4,1.8 q-1.4,0.6 -2.6,-0.2 Z" fill="#3f9e3a"/><g transform="rotate(-7 11.5 8.5)"><rect x="8.3" y="5.2" width="7" height="6.4" rx="0.7" fill="#8fd4fb" stroke="#356aa6" stroke-width="0.9"/><path d="M9,6 h5.6 v2.2 q-2.8,1 -5.6,0.2 Z" fill="#c8ecff" opacity="0.85"/></g><path d="M10.6,12 l2.6,-0.3 l0.9,2.6 l-4.2,0.7 Z" fill="#a4b0c0"/><path d="M9.3,15 l5.4,-0.9 l0.2,0.9 l-5.4,0.9 Z" fill="#8592a4"/></svg><svg class="a" style="left:530.6px;top:106.6px;" width="9" height="8" viewBox="0 0 9 8"><path d="M3.6,1 L1,3.6 L3.6,6.2 M7.6,1 L5,3.6 L7.6,6.2" stroke="#5a5a5a" stroke-width="1.1" fill="none"/></svg><span class="t" style="left:546.8px;top:103.6px;font-size:12px;color:#000;transform:scaleX(0.881);">1621386774</span><svg class="a" style="left:613.6px;top:106.6px;" width="6" height="9" viewBox="0 0 6 9"><path d="M1.2,1 L4.2,4 L1.2,7" stroke="#44444c" stroke-width="1.9" fill="none"/></svg><svg class="a" style="left:629.1px;top:108.7px;" width="8" height="5" viewBox="0 0 8 5"><path d="M0.3,0 H7.7 L4,4.4 Z" fill="#222"/></svg><svg class="a" style="left:650px;top:105px;" width="12" height="11" viewBox="0 0 12 11"><rect x="8" y="1" width="3" height="9" fill="#c6d8ee"/><path d="M6.5,1 L1.5,5.5 L6.5,10 Z" fill="#c6d8ee"/></svg><svg class="a" style="left:666px;top:105px;" width="13" height="11" viewBox="0 0 13 11"><path d="M5.6,1 L0.8,5.5 L5.6,10 Z M7.4,1 L12.2,5.5 L7.4,10 Z" fill="#c6d8ee"/></svg><svg class="a" style="left:686px;top:105px;" width="12" height="11" viewBox="0 0 12 11"><path d="M1.5,1.2 L10.5,9.8 M10.5,1.2 L1.5,9.8" stroke="#c6d8ee" stroke-width="2.2"/></svg><div class="a " style="left:406px;top:148px;width:297px;height:1px;background:#e3ecf7;"></div><div class="a " style="left:602px;top:124px;width:1px;height:24px;background:#e3ecf7;"></div><div class="a " style="left:660px;top:124px;width:1px;height:24px;background:#e3ecf7;"></div><svg class="a" style="left:410px;top:125px" width="36" height="22" viewBox="410 125 36 22"><text class="g" x="412" y="140.7" font-size="13" fill="#000">名称</text></svg><svg class="a" style="left:449.5px;top:132px;" width="12" height="7" viewBox="0 0 12 7"><path d="M0.5,6.5 L6,0.8 L11.5,6.5 Z" fill="#a6a6a6"/></svg><svg class="a" style="left:627px;top:125px" width="36" height="22" viewBox="627 125 36 22"><text class="g" x="629.2" y="140.7" font-size="13" fill="#000">大小</text></svg><svg class="a" style="left:664px;top:125px" width="36" height="22" viewBox="664 125 36 22"><text class="g" x="666.7" y="140.7" font-size="13" fill="#000">类型</text></svg><svg class="a" style="left:413.2px;top:151.9px;" width="12" height="14" viewBox="0 0 12 14"><g><rect x="0" y="0" width="10.8" height="13.6" fill="#fbbd1f"/><rect x="1" y="1" width="8.8" height="11.6" fill="#fbeb70"/><rect x="9.6" y="0" width="2" height="6.8" fill="#fbaa18"/></g></svg><span class="t" style="left:430.7px;top:151.8px;font-size:12px;color:#1616b8;transform:scaleX(0.972);">AppWebCache</span><svg class="a" style="left:663px;top:148px" width="62" height="22" viewBox="663 148 62 22"><text class="g" x="665.4" y="163.4" font-size="13" fill="#1616b8">文件目录</text></svg><svg class="a" style="left:413.2px;top:170.9px;" width="12" height="14" viewBox="0 0 12 14"><g><rect x="0" y="0" width="10.8" height="13.6" fill="#fbbd1f"/><rect x="1" y="1" width="8.8" height="11.6" fill="#fbeb70"/><rect x="9.6" y="0" width="2" height="6.8" fill="#fbaa18"/></g></svg><span class="t" style="left:430.7px;top:170.8px;font-size:12px;color:#1616b8;transform:scaleX(0.991);">Audio</span><svg class="a" style="left:663px;top:167px" width="62" height="22" viewBox="663 167 62 22"><text class="g" x="665.4" y="182.4" font-size="13" fill="#1616b8">文件目录</text></svg><svg class="a" style="left:413.2px;top:189.9px;" width="12" height="14" viewBox="0 0 12 14"><g><rect x="0" y="0" width="10.8" height="13.6" fill="#fbbd1f"/><rect x="1" y="1" width="8.8" height="11.6" fill="#fbeb70"/><rect x="9.6" y="0" width="2" height="6.8" fill="#fbaa18"/></g></svg><span class="t" style="left:430.7px;top:189.8px;font-size:12px;color:#1616b8;transform:scaleX(0.932);">CloudRes</span><svg class="a" style="left:663px;top:186px" width="62" height="22" viewBox="663 186 62 22"><text class="g" x="665.4" y="201.4" font-size="13" fill="#1616b8">文件目录</text></svg><svg class="a" style="left:413.2px;top:208.9px;" width="12" height="14" viewBox="0 0 12 14"><g><rect x="0" y="0" width="10.8" height="13.6" fill="#fbbd1f"/><rect x="1" y="1" width="8.8" height="11.6" fill="#fbeb70"/><rect x="9.6" y="0" width="2" height="6.8" fill="#fbaa18"/></g></svg><span class="t" style="left:430.7px;top:208.8px;font-size:12px;color:#1616b8;transform:scaleX(0.956);">Emoji</span><svg class="a" style="left:663px;top:205px" width="62" height="22" viewBox="663 205 62 22"><text class="g" x="665.4" y="220.4" font-size="13" fill="#1616b8">文件目录</text></svg><svg class="a" style="left:413.2px;top:227.9px;" width="12" height="14" viewBox="0 0 12 14"><g><rect x="0" y="0" width="10.8" height="13.6" fill="#fbbd1f"/><rect x="1" y="1" width="8.8" height="11.6" fill="#fbeb70"/><rect x="9.6" y="0" width="2" height="6.8" fill="#fbaa18"/></g></svg><span class="t" style="left:430.7px;top:227.8px;font-size:12px;color:#1616b8;transform:scaleX(0.902);">FileRecv</span><svg class="a" style="left:663px;top:224px" width="62" height="22" viewBox="663 224 62 22"><text class="g" x="665.4" y="239.4" font-size="13" fill="#1616b8">文件目录</text></svg><svg class="a" style="left:413.2px;top:246.9px;" width="12" height="14" viewBox="0 0 12 14"><g><rect x="0" y="0" width="10.8" height="13.6" fill="#fbbd1f"/><rect x="1" y="1" width="8.8" height="11.6" fill="#fbeb70"/><rect x="9.6" y="0" width="2" height="6.8" fill="#fbaa18"/></g></svg><span class="t" style="left:430.7px;top:246.8px;font-size:12px;color:#1616b8;transform:scaleX(0.963);">Image</span><svg class="a" style="left:663px;top:243px" width="62" height="22" viewBox="663 243 62 22"><text class="g" x="665.4" y="258.4" font-size="13" fill="#1616b8">文件目录</text></svg><svg class="a" style="left:413.2px;top:265.90000000000003px;" width="12" height="14" viewBox="0 0 12 14"><g><rect x="0" y="0" width="10.8" height="13.6" fill="#fbbd1f"/><rect x="1" y="1" width="8.8" height="11.6" fill="#fbeb70"/><rect x="9.6" y="0" width="2" height="6.8" fill="#fbaa18"/></g></svg><span class="t" style="left:430.7px;top:265.8px;font-size:12px;color:#1616b8;transform:scaleX(0.911);">QQ</span><svg class="a" style="left:663px;top:262px" width="62" height="22" viewBox="663 262 62 22"><text class="g" x="665.4" y="277.4" font-size="13" fill="#1616b8">文件目录</text></svg><svg class="a" style="left:413.2px;top:284.90000000000003px;" width="12" height="14" viewBox="0 0 12 14"><g><rect x="0" y="0" width="10.8" height="13.6" fill="#fbbd1f"/><rect x="1" y="1" width="8.8" height="11.6" fill="#fbeb70"/><rect x="9.6" y="0" width="2" height="6.8" fill="#fbaa18"/></g></svg><span class="t" style="left:430.7px;top:284.8px;font-size:12px;color:#1616b8;transform:scaleX(0.963);">RecommendFace</span><svg class="a" style="left:663px;top:281px" width="62" height="22" viewBox="663 281 62 22"><text class="g" x="665.4" y="296.4" font-size="13" fill="#1616b8">文件目录</text></svg><svg class="a" style="left:413px;top:303.0px;" width="14" height="17" viewBox="0 0 14 17"><path d="M0.5,0.5 H8.5 L12.5,4.5 V15.3 H0.5 Z" fill="url(#pg)" stroke="#9a9a9a"/><path d="M8.5,0.5 V4.5 H12.5" fill="#fff" stroke="#9a9a9a" stroke-width="0.8"/><circle cx="5" cy="6.2" r="2.5" fill="#eef3fb" stroke="#4c78cc" stroke-width="0.9" stroke-dasharray="1.6 0.5"/><circle cx="5" cy="6.2" r="0.9" fill="none" stroke="#4c78cc" stroke-width="0.7"/><circle cx="7.9" cy="9.6" r="1.9" fill="#f4f7fd" stroke="#4c78cc" stroke-width="0.8" stroke-dasharray="1.3 0.5"/></svg><span class="t" style="left:430.7px;top:303.8px;font-size:12px;color:#000;transform:scaleX(0.966);">CustomFace.db</span><span class="t" style="left:617.1px;top:303.8px;font-size:12px;color:#000;transform:scaleX(0.885);">32.5 KB</span><span class="t" style="left:665.4px;top:303.8px;font-size:12px;color:#000;transform:scaleX(0.870);">Data Base File</span><svg class="a" style="left:413px;top:322.0px;" width="14" height="17" viewBox="0 0 14 17"><path d="M0.5,0.5 H8.5 L12.5,4.5 V15.3 H0.5 Z" fill="url(#pg)" stroke="#9a9a9a"/><path d="M8.5,0.5 V4.5 H12.5" fill="#fff" stroke="#9a9a9a" stroke-width="0.8"/></svg><span class="t" style="left:430.7px;top:322.8px;font-size:12px;color:#000;transform:scaleX(0.968);">CustomFace.dbc</span><span class="t" style="left:615.4px;top:322.8px;font-size:12px;color:#000;transform:scaleX(0.885);">1.52 MB</span><span class="t" style="left:665.4px;top:322.8px;font-size:12px;color:#000;transform:scaleX(0.870);">DBC File</span><div class="a " style="left:407px;top:338.5px;width:76px;height:19px;background:#f5f7fa;border:1px solid #dcdfe4;box-sizing:border-box;"></div><svg class="a" style="left:413px;top:341.0px;" width="14" height="17" viewBox="0 0 14 17"><path d="M0.5,0.5 H8.5 L12.5,4.5 V15.3 H0.5 Z" fill="url(#pg)" stroke="#9a9a9a"/><path d="M8.5,0.5 V4.5 H12.5" fill="#fff" stroke="#9a9a9a" stroke-width="0.8"/><path d="M3.5,4.5 H8 L10,6.5 V12.5 H3.5 Z" fill="#fafafa" stroke="#b0b0b0" stroke-width="0.8"/><path d="M5,9.3 H8.4 M6.7,7.6 V11" stroke="#28a028" stroke-width="1.5"/></svg><span class="t" style="left:430.7px;top:341.8px;font-size:12px;color:#000;transform:scaleX(0.953);">Emoji.zip</span><span class="t" style="left:615.4px;top:341.8px;font-size:12px;color:#000;transform:scaleX(0.885);">1.13 MB</span><span class="t" style="left:665.4px;top:341.8px;font-size:12px;color:#000;transform:scaleX(0.900);">Zip</span><svg class="a" style="left:683px;top:339px" width="35" height="21" viewBox="683 339 35 21"><text class="g" x="685" y="353.6" font-size="12.6" fill="#000">压缩</text></svg><svg class="a" style="left:413px;top:360.0px;" width="14" height="17" viewBox="0 0 14 17"><path d="M0.5,0.5 H8.5 L12.5,4.5 V15.3 H0.5 Z" fill="url(#pg)" stroke="#9a9a9a"/><path d="M8.5,0.5 V4.5 H12.5" fill="#fff" stroke="#9a9a9a" stroke-width="0.8"/><circle cx="5" cy="6.2" r="2.5" fill="#eef3fb" stroke="#4c78cc" stroke-width="0.9" stroke-dasharray="1.6 0.5"/><circle cx="5" cy="6.2" r="0.9" fill="none" stroke="#4c78cc" stroke-width="0.7"/><circle cx="7.9" cy="9.6" r="1.9" fill="#f4f7fd" stroke="#4c78cc" stroke-width="0.8" stroke-dasharray="1.3 0.5"/></svg><span class="t" style="left:430.7px;top:360.8px;font-size:12px;color:#000;transform:scaleX(0.971);">FileInfo.db</span><span class="t" style="left:617.1px;top:360.8px;font-size:12px;color:#000;transform:scaleX(0.885);">35.2 KB</span><span class="t" style="left:665.4px;top:360.8px;font-size:12px;color:#000;transform:scaleX(0.870);">Data Base File</span><svg class="a" style="left:413px;top:379.0px;" width="14" height="17" viewBox="0 0 14 17"><path d="M0.5,0.5 H8.5 L12.5,4.5 V15.3 H0.5 Z" fill="url(#pg)" stroke="#9a9a9a"/><path d="M8.5,0.5 V4.5 H12.5" fill="#fff" stroke="#9a9a9a" stroke-width="0.8"/></svg><span class="t" style="left:430.7px;top:379.8px;font-size:12px;color:#000;transform:scaleX(0.984);">ggdata.dat</span><svg class="a" style="left:627px;top:377px" width="35" height="21" viewBox="627 377 35 21"><text class="g" x="629.3" y="391.6" font-size="12.6" fill="#000">字节</text></svg><span class="t" style="left:613.7px;top:379.8px;font-size:12px;color:#000;transform:scaleX(0.920);">80</span><span class="t" style="left:665.4px;top:379.8px;font-size:12px;color:#000;transform:scaleX(0.870);">DAT File</span><svg class="a" style="left:413px;top:398.0px;" width="14" height="17" viewBox="0 0 14 17"><path d="M0.5,0.5 H8.5 L12.5,4.5 V15.3 H0.5 Z" fill="url(#pg)" stroke="#9a9a9a"/><path d="M8.5,0.5 V4.5 H12.5" fill="#fff" stroke="#9a9a9a" stroke-width="0.8"/><circle cx="5" cy="6.2" r="2.5" fill="#eef3fb" stroke="#4c78cc" stroke-width="0.9" stroke-dasharray="1.6 0.5"/><circle cx="5" cy="6.2" r="0.9" fill="none" stroke="#4c78cc" stroke-width="0.7"/><circle cx="7.9" cy="9.6" r="1.9" fill="#f4f7fd" stroke="#4c78cc" stroke-width="0.8" stroke-dasharray="1.3 0.5"/></svg><span class="t" style="left:430.7px;top:398.8px;font-size:12px;color:#000;transform:scaleX(0.976);">GroupActiveStatus.db</span><span class="t" style="left:626.0px;top:398.8px;font-size:12px;color:#000;transform:scaleX(0.885);">25 KB</span><span class="t" style="left:665.4px;top:398.8px;font-size:12px;color:#000;transform:scaleX(0.870);">Data Base File</span><svg class="a" style="left:413px;top:417.0px;" width="14" height="17" viewBox="0 0 14 17"><path d="M0.5,0.5 H8.5 L12.5,4.5 V15.3 H0.5 Z" fill="url(#pg)" stroke="#9a9a9a"/><path d="M8.5,0.5 V4.5 H12.5" fill="#fff" stroke="#9a9a9a" stroke-width="0.8"/></svg><span class="t" style="left:430.7px;top:417.8px;font-size:12px;color:#000;transform:scaleX(0.993);">GroupActiveStatus.db-journal</span><svg class="a" style="left:627px;top:415px" width="35" height="21" viewBox="627 415 35 21"><text class="g" x="629.3" y="429.6" font-size="12.6" fill="#000">字节</text></svg><span class="t" style="left:619.9px;top:417.8px;font-size:12px;color:#000;transform:scaleX(0.920);">0</span><span class="t" style="left:665.4px;top:417.8px;font-size:12px;color:#000;transform:scaleX(0.870);">DB-JOURNAL</span><svg class="a" style="left:413px;top:436.0px;" width="14" height="17" viewBox="0 0 14 17"><path d="M0.5,0.5 H8.5 L12.5,4.5 V15.3 H0.5 Z" fill="url(#pg)" stroke="#9a9a9a"/><path d="M8.5,0.5 V4.5 H12.5" fill="#fff" stroke="#9a9a9a" stroke-width="0.8"/><circle cx="5" cy="6.2" r="2.5" fill="#eef3fb" stroke="#4c78cc" stroke-width="0.9" stroke-dasharray="1.6 0.5"/><circle cx="5" cy="6.2" r="0.9" fill="none" stroke="#4c78cc" stroke-width="0.7"/><circle cx="7.9" cy="9.6" r="1.9" fill="#f4f7fd" stroke="#4c78cc" stroke-width="0.8" stroke-dasharray="1.3 0.5"/></svg><span class="t" style="left:430.7px;top:436.8px;font-size:12px;color:#000;transform:scaleX(0.992);">Info.db</span><span class="t" style="left:615.4px;top:436.8px;font-size:12px;color:#000;transform:scaleX(0.885);">1.18 MB</span><span class="t" style="left:665.4px;top:436.8px;font-size:12px;color:#000;transform:scaleX(0.870);">Data Base File</span><svg class="a" style="left:413px;top:455.0px;" width="14" height="17" viewBox="0 0 14 17"><path d="M0.5,0.5 H8.5 L12.5,4.5 V15.3 H0.5 Z" fill="url(#pg)" stroke="#9a9a9a"/><path d="M8.5,0.5 V4.5 H12.5" fill="#fff" stroke="#9a9a9a" stroke-width="0.8"/><circle cx="5" cy="6.2" r="2.5" fill="#eef3fb" stroke="#4c78cc" stroke-width="0.9" stroke-dasharray="1.6 0.5"/><circle cx="5" cy="6.2" r="0.9" fill="none" stroke="#4c78cc" stroke-width="0.7"/><circle cx="7.9" cy="9.6" r="1.9" fill="#f4f7fd" stroke="#4c78cc" stroke-width="0.8" stroke-dasharray="1.3 0.5"/></svg><span class="t" style="left:430.7px;top:455.8px;font-size:12px;color:#000;transform:scaleX(1.006);">Infocenter.db</span><span class="t" style="left:617.1px;top:455.8px;font-size:12px;color:#000;transform:scaleX(0.885);">32.5 KB</span><span class="t" style="left:665.4px;top:455.8px;font-size:12px;color:#000;transform:scaleX(0.870);">Data Base File</span><svg class="a" style="left:413px;top:474.0px;" width="14" height="17" viewBox="0 0 14 17"><path d="M0.5,0.5 H8.5 L12.5,4.5 V15.3 H0.5 Z" fill="url(#pg)" stroke="#9a9a9a"/><path d="M8.5,0.5 V4.5 H12.5" fill="#fff" stroke="#9a9a9a" stroke-width="0.8"/><circle cx="5" cy="6.2" r="2.5" fill="#eef3fb" stroke="#4c78cc" stroke-width="0.9" stroke-dasharray="1.6 0.5"/><circle cx="5" cy="6.2" r="0.9" fill="none" stroke="#4c78cc" stroke-width="0.7"/><circle cx="7.9" cy="9.6" r="1.9" fill="#f4f7fd" stroke="#4c78cc" stroke-width="0.8" stroke-dasharray="1.3 0.5"/></svg><span class="t" style="left:430.7px;top:474.8px;font-size:12px;color:#000;transform:scaleX(0.984);">Misc.db</span><span class="t" style="left:615.4px;top:474.8px;font-size:12px;color:#000;transform:scaleX(0.885);">1.15 MB</span><span class="t" style="left:665.4px;top:474.8px;font-size:12px;color:#000;transform:scaleX(0.870);">Data Base File</span><svg class="a" style="left:413px;top:493.0px;" width="14" height="17" viewBox="0 0 14 17"><path d="M0.5,0.5 H8.5 L12.5,4.5 V15.3 H0.5 Z" fill="url(#pg)" stroke="#9a9a9a"/><path d="M8.5,0.5 V4.5 H12.5" fill="#fff" stroke="#9a9a9a" stroke-width="0.8"/><circle cx="5" cy="6.2" r="2.5" fill="#eef3fb" stroke="#4c78cc" stroke-width="0.9" stroke-dasharray="1.6 0.5"/><circle cx="5" cy="6.2" r="0.9" fill="none" stroke="#4c78cc" stroke-width="0.7"/><circle cx="7.9" cy="9.6" r="1.9" fill="#f4f7fd" stroke="#4c78cc" stroke-width="0.8" stroke-dasharray="1.3 0.5"/></svg><span class="t" style="left:430.7px;top:493.8px;font-size:12px;color:#000;transform:scaleX(0.960);">Msg3.0.db</span><span class="t" style="left:620.1px;top:493.8px;font-size:12px;color:#000;transform:scaleX(0.885);">953 KB</span><span class="t" style="left:665.4px;top:493.8px;font-size:12px;color:#000;transform:scaleX(0.870);">Data Base File</span><svg class="a" style="left:413px;top:511.99999999999994px;" width="14" height="17" viewBox="0 0 14 17"><path d="M0.5,0.5 H8.5 L12.5,4.5 V15.3 H0.5 Z" fill="url(#pg)" stroke="#9a9a9a"/><path d="M8.5,0.5 V4.5 H12.5" fill="#fff" stroke="#9a9a9a" stroke-width="0.8"/><circle cx="5" cy="6.2" r="2.5" fill="#eef3fb" stroke="#4c78cc" stroke-width="0.9" stroke-dasharray="1.6 0.5"/><circle cx="5" cy="6.2" r="0.9" fill="none" stroke="#4c78cc" stroke-width="0.7"/><circle cx="7.9" cy="9.6" r="1.9" fill="#f4f7fd" stroke="#4c78cc" stroke-width="0.8" stroke-dasharray="1.3 0.5"/></svg><span class="t" style="left:430.7px;top:512.8px;font-size:12px;color:#000;transform:scaleX(0.960);">Registry.db</span><span class="t" style="left:617.1px;top:512.8px;font-size:12px;color:#000;transform:scaleX(0.885);">48.5 KB</span><span class="t" style="left:665.4px;top:512.8px;font-size:12px;color:#000;transform:scaleX(0.870);">Data Base File</span><svg class="a" style="left:413px;top:531.0px;" width="14" height="17" viewBox="0 0 14 17"><path d="M0.5,0.5 H8.5 L12.5,4.5 V15.3 H0.5 Z" fill="url(#pg)" stroke="#9a9a9a"/><path d="M8.5,0.5 V4.5 H12.5" fill="#fff" stroke="#9a9a9a" stroke-width="0.8"/><circle cx="5" cy="6.2" r="2.5" fill="#eef3fb" stroke="#4c78cc" stroke-width="0.9" stroke-dasharray="1.6 0.5"/><circle cx="5" cy="6.2" r="0.9" fill="none" stroke="#4c78cc" stroke-width="0.7"/><circle cx="7.9" cy="9.6" r="1.9" fill="#f4f7fd" stroke="#4c78cc" stroke-width="0.8" stroke-dasharray="1.3 0.5"/></svg><span class="t" style="left:430.7px;top:531.8px;font-size:12px;color:#000;transform:scaleX(1.001);">Thumbnails.db</span><span class="t" style="left:617.1px;top:531.8px;font-size:12px;color:#000;transform:scaleX(0.885);">33.6 KB</span><span class="t" style="left:665.4px;top:531.8px;font-size:12px;color:#000;transform:scaleX(0.870);">Data Base File</span><svg class="a" style="left:413px;top:550.0px;" width="14" height="17" viewBox="0 0 14 17"><path d="M0.5,0.5 H8.5 L12.5,4.5 V15.3 H0.5 Z" fill="url(#pg)" stroke="#9a9a9a"/><path d="M8.5,0.5 V4.5 H12.5" fill="#fff" stroke="#9a9a9a" stroke-width="0.8"/></svg><span class="t" style="left:430.7px;top:550.8px;font-size:12px;color:#000;transform:scaleX(1.008);">WordBuild.midx</span><span class="t" style="left:617.1px;top:550.8px;font-size:12px;color:#000;transform:scaleX(0.885);">1.18 KB</span><span class="t" style="left:665.4px;top:550.8px;font-size:12px;color:#000;transform:scaleX(0.870);">MIDX File</span><div class="a " style="left:405px;top:628px;width:298px;height:16px;background:#f0f0f0;"></div><svg class="a" style="left:410px;top:631px;" width="8" height="10" viewBox="0 0 8 10"><path d="M6.2,1.2 L2.2,5 L6.2,8.8" stroke="#505050" stroke-width="1.9" fill="none"/></svg><svg class="a" style="left:690px;top:631px;" width="8" height="10" viewBox="0 0 8 10"><path d="M1.8,1.2 L5.8,5 L1.8,8.8" stroke="#505050" stroke-width="1.9" fill="none"/></svg><div class="a " style="left:423px;top:628px;width:132px;height:16px;background:#cdcdcd;"></div><div class="a " style="left:405px;top:644px;width:298px;height:24px;background:linear-gradient(#fbfbfb,#ececec);"></div><div class="a " style="left:405px;top:644px;width:298px;height:1px;background:#a9a9a9;"></div><div class="a " style="left:496px;top:645px;width:17px;height:20px;background:linear-gradient(#e4e4e4,#f2f2f2);border:1px solid #b4b4b4;border-top:none;border-left:none;border-radius:0 0 6px 0;box-sizing:border-box;"></div><svg class="a" style="left:498px;top:650px;" width="11" height="11" viewBox="0 0 11 11"><path d="M5.5,1.5 V9.5 M1.5,5.5 H9.5" stroke="#9a9a9a" stroke-width="1.6"/></svg><div class="a " style="left:406px;top:644px;width:90px;height:23.6px;background:#fff;border:1px solid #a9a9a9;border-top:none;border-radius:0 0 5px 5px;box-sizing:border-box;border-left-color:#c8c8c8;"></div><svg class="a" style="left:410px;top:647px;" width="16" height="16.5" viewBox="0 0 16 16.5"><circle cx="6.4" cy="6.8" r="6.1" fill="url(#globe2)" stroke="#1c4a98" stroke-width="0.6"/><path d="M2.4,3.6 q1.8,-2 4.2,-1.2 q1.2,1.4 -0.6,2.6 q0.4,1.6 -1.4,2.2 q-0.4,2 -1.8,2.2 q-1.6,-1.6 -1.6,-3.6 q0.2,-1.2 1.2,-2.2 Z M7.4,8 q1.6,-0.8 2.4,0.6 q-0.2,2.2 -2,3.4 q-1.2,-1.6 -0.4,-4 Z M8.4,2 q1.6,0.4 2.4,1.8 q-1.4,0.6 -2.6,-0.2 Z" fill="#3f9e3a"/><g transform="rotate(-7 11.5 8.5)"><rect x="8.3" y="5.2" width="7" height="6.4" rx="0.7" fill="#8fd4fb" stroke="#356aa6" stroke-width="0.9"/><path d="M9,6 h5.6 v2.2 q-2.8,1 -5.6,0.2 Z" fill="#c8ecff" opacity="0.85"/></g><path d="M10.6,12 l2.6,-0.3 l0.9,2.6 l-4.2,0.7 Z" fill="#a4b0c0"/><path d="M9.3,15 l5.4,-0.9 l0.2,0.9 l-5.4,0.9 Z" fill="#8592a4"/></svg><span class="t" style="left:428.9px;top:648.6px;font-size:12px;color:#000;transform:scaleX(0.886);">1621386774</span></div></div><div class="a " style="left:405px;top:97px;width:1px;height:571px;background:#a0a0a0;"></div><div class="a " style="left:702px;top:97px;width:1px;height:571px;background:#c4c4c4;"></div><div class="a " style="left:703px;top:97px;width:239px;height:20px;background:linear-gradient(#fafafb 0%,#f3f4f5 55%,#e4e5e6 100%);"></div><div class="a " style="left:703px;top:97px;width:1px;height:593px;background:#b0b0b0;"></div><span class="t" style="left:707.6px;top:99.4px;font-size:12px;color:#000;transform:scaleX(0.778);">E...</span><svg class="a" style="left:735.4px;top:101.5px;" width="12" height="10" viewBox="0 0 12 10"><g transform="translate(6,5) scale(1,1)"><path d="M-5,0 L-0.5,-4.2 L-0.5,-1.5 L5,-1.5 L5,1.5 L-0.5,1.5 L-0.5,4.2 Z" fill="#111"/></g></svg><svg class="a" style="left:755.3px;top:101.5px;" width="12" height="10" viewBox="0 0 12 10"><g transform="translate(6,5) scale(-1,1)"><path d="M-5,0 L-0.5,-4.2 L-0.5,-1.5 L5,-1.5 L5,1.5 L-0.5,1.5 L-0.5,4.2 Z" fill="#111"/></g></svg><svg class="a" style="left:774.8px;top:101.5px;" width="12" height="10" viewBox="0 0 12 10"><g transform="translate(6,0) scale(1,1) translate(-6,0)"><path d="M3.2,4.6 A3.5,3.5 0 1 1 7.8,8.6" fill="none" stroke="#a8a8a8" stroke-width="2.9"/><path d="M0.2,1.6 L6.6,1.9 L1.6,8.2 Z" fill="#a8a8a8"/></g></svg><svg class="a" style="left:792.6px;top:101.5px;" width="12" height="10" viewBox="0 0 12 10"><g transform="translate(6,0) scale(-1,1) translate(-6,0)"><path d="M3.2,4.6 A3.5,3.5 0 1 1 7.8,8.6" fill="none" stroke="#a8a8a8" stroke-width="2.9"/><path d="M0.2,1.6 L6.6,1.9 L1.6,8.2 Z" fill="#a8a8a8"/></g></svg><svg class="a" style="left:811.2px;top:101.2px;" width="14" height="12" viewBox="0 0 14 12"><circle cx="3.9" cy="4.6" r="2.7" fill="none" stroke="#a8a8a8" stroke-width="1.5"/><path d="M6,6.8 L9.2,10.4" stroke="#a8a8a8" stroke-width="2.2" stroke-linecap="round"/><path d="M8,3.4 h4.6 M10.3,1.1 v4.6" stroke="#a8a8a8" stroke-width="1.1"/></svg><svg class="a" style="left:830.2px;top:101.2px;" width="14" height="12" viewBox="0 0 14 12"><circle cx="3.9" cy="4.6" r="2.7" fill="none" stroke="#a8a8a8" stroke-width="1.5"/><path d="M6,6.8 L9.2,10.4" stroke="#a8a8a8" stroke-width="2.2" stroke-linecap="round"/><path d="M8,3.4 h4.4" stroke="#a8a8a8" stroke-width="1.1"/></svg><svg class="a" style="left:849.3px;top:101.2px;" width="14" height="12" viewBox="0 0 14 12"><circle cx="3.9" cy="4.6" r="2.7" fill="none" stroke="#a8a8a8" stroke-width="1.5"/><path d="M6,6.8 L9.2,10.4" stroke="#a8a8a8" stroke-width="2.2" stroke-linecap="round"/><path d="M8.6,1.2 l3.6,4 M12.2,1.2 l-3.6,4" stroke="#a8a8a8" stroke-width="0.9"/></svg><svg class="a" style="left:869px;top:101.8px;" width="12" height="11" viewBox="0 0 12 11"><rect x="0.6" y="0.6" width="10.8" height="9.2" fill="none" stroke="#a8a8a8" stroke-width="1.1"/><rect x="3.6" y="3.4" width="4.8" height="3.4" fill="none" stroke="#a8a8a8" stroke-width="1.1"/></svg><svg class="a" style="left:888px;top:101.8px;" width="12" height="11" viewBox="0 0 12 11"><rect x="0.6" y="0.6" width="10.8" height="9.2" fill="none" stroke="#a8a8a8" stroke-width="1.1"/><rect x="2.4" y="2.4" width="7.2" height="5.4" fill="none" stroke="#a8a8a8" stroke-width="1.1"/></svg><div class="a " style="left:908px;top:103px;width:10px;height:2.6px;background:#111;"></div><div class="a " style="left:908px;top:108.2px;width:10px;height:2.6px;background:#111;"></div><svg class="a" style="left:926px;top:101px;" width="11" height="11" viewBox="0 0 11 11"><path d="M1.3,1.3 L9.7,9.7 M9.7,1.3 L1.3,9.7" stroke="#111" stroke-width="2.2"/></svg><div class="a" style="left:706px;top:116px;width:236px;height:574px;overflow:hidden;"><div class="a" style="left:-706px;top:-116px"><div class="a " style="left:706px;top:116px;width:236px;height:574px;background:#fff;border:1px solid #a0a0a0;box-sizing:border-box;border-left-color:#828282;"></div><span class="t" style="left:713.4px;top:121.7px;font-size:12.5px;color:#000;transform:scaleX(0.942);">Name</span><div class="a " style="left:707px;top:140px;width:219px;height:1px;background:#dfe8f4;"></div><svg class="a" style="left:823px;top:118px;" width="10" height="5" viewBox="0 0 10 5"><path d="M0.8,4.6 L4.6,0.6 L8.4,4.6 Z" fill="#3f7fd8"/><path d="M2.4,4.6 L4.6,2.4 L6.8,4.6 Z" fill="#cfe2fa"/></svg><div class="a " style="left:711px;top:141px;width:214px;height:19px;background:#f3f5f9;border:1px solid #dde1e8;box-sizing:border-box;"></div><svg class="a" style="left:715px;top:142.10000000000002px;" width="16" height="16" viewBox="0 0 16 16"><rect x="0.5" y="0.5" width="15" height="14.5" fill="#fff" stroke="#0a8397"/><rect x="0" y="14" width="16" height="2" fill="#0a8397"/><path d="M2,12.5 L2,11.3 L5.9,7.2 L8.6,10 L10,9 Q12,8.3 13.9,10.6 L13.9,12.5 Z" fill="#0a8397"/><rect x="9.2" y="3" width="2.9" height="2.9" fill="#0a8397"/></svg><span class="t" style="left:733.4px;top:143.8px;font-size:12px;color:#000;transform:scaleX(0.927);">0x00a9.png</span><svg class="a" style="left:715px;top:161.10000000000002px;" width="16" height="16" viewBox="0 0 16 16"><rect x="0.5" y="0.5" width="15" height="14.5" fill="#fff" stroke="#0a8397"/><rect x="0" y="14" width="16" height="2" fill="#0a8397"/><path d="M2,12.5 L2,11.3 L5.9,7.2 L8.6,10 L10,9 Q12,8.3 13.9,10.6 L13.9,12.5 Z" fill="#0a8397"/><rect x="9.2" y="3" width="2.9" height="2.9" fill="#0a8397"/></svg><span class="t" style="left:733.4px;top:162.8px;font-size:12px;color:#000;transform:scaleX(0.927);">0x00ae.png</span><svg class="a" style="left:715px;top:180.10000000000002px;" width="16" height="16" viewBox="0 0 16 16"><rect x="0.5" y="0.5" width="15" height="14.5" fill="#fff" stroke="#0a8397"/><rect x="0" y="14" width="16" height="2" fill="#0a8397"/><path d="M2,12.5 L2,11.3 L5.9,7.2 L8.6,10 L10,9 Q12,8.3 13.9,10.6 L13.9,12.5 Z" fill="#0a8397"/><rect x="9.2" y="3" width="2.9" height="2.9" fill="#0a8397"/></svg><span class="t" style="left:733.4px;top:181.8px;font-size:12px;color:#000;transform:scaleX(0.940);">0x1c0e3.png</span><svg class="a" style="left:715px;top:199.10000000000002px;" width="16" height="16" viewBox="0 0 16 16"><rect x="0.5" y="0.5" width="15" height="14.5" fill="#fff" stroke="#0a8397"/><rect x="0" y="14" width="16" height="2" fill="#0a8397"/><path d="M2,12.5 L2,11.3 L5.9,7.2 L8.6,10 L10,9 Q12,8.3 13.9,10.6 L13.9,12.5 Z" fill="#0a8397"/><rect x="9.2" y="3" width="2.9" height="2.9" fill="#0a8397"/></svg><span class="t" style="left:733.4px;top:200.8px;font-size:12px;color:#000;transform:scaleX(0.940);">0x1c4e3.png</span><svg class="a" style="left:715px;top:218.10000000000002px;" width="16" height="16" viewBox="0 0 16 16"><rect x="0.5" y="0.5" width="15" height="14.5" fill="#fff" stroke="#0a8397"/><rect x="0" y="14" width="16" height="2" fill="#0a8397"/><path d="M2,12.5 L2,11.3 L5.9,7.2 L8.6,10 L10,9 Q12,8.3 13.9,10.6 L13.9,12.5 Z" fill="#0a8397"/><rect x="9.2" y="3" width="2.9" height="2.9" fill="#0a8397"/></svg><span class="t" style="left:733.4px;top:219.8px;font-size:12px;color:#000;transform:scaleX(0.940);">0x1c8e3.png</span><svg class="a" style="left:715px;top:237.10000000000002px;" width="16" height="16" viewBox="0 0 16 16"><rect x="0.5" y="0.5" width="15" height="14.5" fill="#fff" stroke="#0a8397"/><rect x="0" y="14" width="16" height="2" fill="#0a8397"/><path d="M2,12.5 L2,11.3 L5.9,7.2 L8.6,10 L10,9 Q12,8.3 13.9,10.6 L13.9,12.5 Z" fill="#0a8397"/><rect x="9.2" y="3" width="2.9" height="2.9" fill="#0a8397"/></svg><span class="t" style="left:733.4px;top:238.8px;font-size:12px;color:#000;transform:scaleX(0.940);">0x1cce3.png</span><svg class="a" style="left:715px;top:256.1px;" width="16" height="16" viewBox="0 0 16 16"><rect x="0.5" y="0.5" width="15" height="14.5" fill="#fff" stroke="#0a8397"/><rect x="0" y="14" width="16" height="2" fill="#0a8397"/><path d="M2,12.5 L2,11.3 L5.9,7.2 L8.6,10 L10,9 Q12,8.3 13.9,10.6 L13.9,12.5 Z" fill="#0a8397"/><rect x="9.2" y="3" width="2.9" height="2.9" fill="#0a8397"/></svg><span class="t" style="left:733.4px;top:257.8px;font-size:12px;color:#000;transform:scaleX(0.940);">0x1d0e3.png</span><svg class="a" style="left:715px;top:275.1px;" width="16" height="16" viewBox="0 0 16 16"><rect x="0.5" y="0.5" width="15" height="14.5" fill="#fff" stroke="#0a8397"/><rect x="0" y="14" width="16" height="2" fill="#0a8397"/><path d="M2,12.5 L2,11.3 L5.9,7.2 L8.6,10 L10,9 Q12,8.3 13.9,10.6 L13.9,12.5 Z" fill="#0a8397"/><rect x="9.2" y="3" width="2.9" height="2.9" fill="#0a8397"/></svg><span class="t" style="left:733.4px;top:276.8px;font-size:12px;color:#000;transform:scaleX(0.940);">0x1d4e3.png</span><svg class="a" style="left:715px;top:294.1px;" width="16" height="16" viewBox="0 0 16 16"><rect x="0.5" y="0.5" width="15" height="14.5" fill="#fff" stroke="#0a8397"/><rect x="0" y="14" width="16" height="2" fill="#0a8397"/><path d="M2,12.5 L2,11.3 L5.9,7.2 L8.6,10 L10,9 Q12,8.3 13.9,10.6 L13.9,12.5 Z" fill="#0a8397"/><rect x="9.2" y="3" width="2.9" height="2.9" fill="#0a8397"/></svg><span class="t" style="left:733.4px;top:295.8px;font-size:12px;color:#000;transform:scaleX(0.940);">0x1d8e3.png</span><svg class="a" style="left:715px;top:313.1px;" width="16" height="16" viewBox="0 0 16 16"><rect x="0.5" y="0.5" width="15" height="14.5" fill="#fff" stroke="#0a8397"/><rect x="0" y="14" width="16" height="2" fill="#0a8397"/><path d="M2,12.5 L2,11.3 L5.9,7.2 L8.6,10 L10,9 Q12,8.3 13.9,10.6 L13.9,12.5 Z" fill="#0a8397"/><rect x="9.2" y="3" width="2.9" height="2.9" fill="#0a8397"/></svg><span class="t" style="left:733.4px;top:314.8px;font-size:12px;color:#000;transform:scaleX(0.940);">0x1dce3.png</span><svg class="a" style="left:715px;top:332.1px;" width="16" height="16" viewBox="0 0 16 16"><rect x="0.5" y="0.5" width="15" height="14.5" fill="#fff" stroke="#0a8397"/><rect x="0" y="14" width="16" height="2" fill="#0a8397"/><path d="M2,12.5 L2,11.3 L5.9,7.2 L8.6,10 L10,9 Q12,8.3 13.9,10.6 L13.9,12.5 Z" fill="#0a8397"/><rect x="9.2" y="3" width="2.9" height="2.9" fill="#0a8397"/></svg><span class="t" style="left:733.4px;top:333.8px;font-size:12px;color:#000;transform:scaleX(0.940);">0x1e0e3.png</span><svg class="a" style="left:715px;top:351.1px;" width="16" height="16" viewBox="0 0 16 16"><rect x="0.5" y="0.5" width="15" height="14.5" fill="#fff" stroke="#0a8397"/><rect x="0" y="14" width="16" height="2" fill="#0a8397"/><path d="M2,12.5 L2,11.3 L5.9,7.2 L8.6,10 L10,9 Q12,8.3 13.9,10.6 L13.9,12.5 Z" fill="#0a8397"/><rect x="9.2" y="3" width="2.9" height="2.9" fill="#0a8397"/></svg><span class="t" style="left:733.4px;top:352.8px;font-size:12px;color:#000;transform:scaleX(0.940);">0x1e4e3.png</span><svg class="a" style="left:715px;top:370.1px;" width="16" height="16" viewBox="0 0 16 16"><rect x="0.5" y="0.5" width="15" height="14.5" fill="#fff" stroke="#0a8397"/><rect x="0" y="14" width="16" height="2" fill="#0a8397"/><path d="M2,12.5 L2,11.3 L5.9,7.2 L8.6,10 L10,9 Q12,8.3 13.9,10.6 L13.9,12.5 Z" fill="#0a8397"/><rect x="9.2" y="3" width="2.9" height="2.9" fill="#0a8397"/></svg><span class="t" style="left:733.4px;top:371.8px;font-size:12px;color:#000;transform:scaleX(0.940);">0x1f0cf.png</span><svg class="a" style="left:715px;top:389.1px;" width="16" height="16" viewBox="0 0 16 16"><rect x="0.5" y="0.5" width="15" height="14.5" fill="#fff" stroke="#0a8397"/><rect x="0" y="14" width="16" height="2" fill="#0a8397"/><path d="M2,12.5 L2,11.3 L5.9,7.2 L8.6,10 L10,9 Q12,8.3 13.9,10.6 L13.9,12.5 Z" fill="#0a8397"/><rect x="9.2" y="3" width="2.9" height="2.9" fill="#0a8397"/></svg><span class="t" style="left:733.4px;top:390.8px;font-size:12px;color:#000;transform:scaleX(0.940);">0x1f1e81f1f3.png</span><svg class="a" style="left:715px;top:408.1px;" width="16" height="16" viewBox="0 0 16 16"><rect x="0.5" y="0.5" width="15" height="14.5" fill="#fff" stroke="#0a8397"/><rect x="0" y="14" width="16" height="2" fill="#0a8397"/><path d="M2,12.5 L2,11.3 L5.9,7.2 L8.6,10 L10,9 Q12,8.3 13.9,10.6 L13.9,12.5 Z" fill="#0a8397"/><rect x="9.2" y="3" width="2.9" height="2.9" fill="#0a8397"/></svg><span class="t" style="left:733.4px;top:409.8px;font-size:12px;color:#000;transform:scaleX(0.940);">0x1f1e91f1ea.png</span><svg class="a" style="left:715px;top:427.1px;" width="16" height="16" viewBox="0 0 16 16"><rect x="0.5" y="0.5" width="15" height="14.5" fill="#fff" stroke="#0a8397"/><rect x="0" y="14" width="16" height="2" fill="#0a8397"/><path d="M2,12.5 L2,11.3 L5.9,7.2 L8.6,10 L10,9 Q12,8.3 13.9,10.6 L13.9,12.5 Z" fill="#0a8397"/><rect x="9.2" y="3" width="2.9" height="2.9" fill="#0a8397"/></svg><span class="t" style="left:733.4px;top:428.8px;font-size:12px;color:#000;transform:scaleX(0.940);">0x1f1ea1f1f8.png</span><svg class="a" style="left:715px;top:446.1px;" width="16" height="16" viewBox="0 0 16 16"><rect x="0.5" y="0.5" width="15" height="14.5" fill="#fff" stroke="#0a8397"/><rect x="0" y="14" width="16" height="2" fill="#0a8397"/><path d="M2,12.5 L2,11.3 L5.9,7.2 L8.6,10 L10,9 Q12,8.3 13.9,10.6 L13.9,12.5 Z" fill="#0a8397"/><rect x="9.2" y="3" width="2.9" height="2.9" fill="#0a8397"/></svg><span class="t" style="left:733.4px;top:447.8px;font-size:12px;color:#000;transform:scaleX(0.940);">0x1f1eb1f1f7.png</span><svg class="a" style="left:715px;top:465.1px;" width="16" height="16" viewBox="0 0 16 16"><rect x="0.5" y="0.5" width="15" height="14.5" fill="#fff" stroke="#0a8397"/><rect x="0" y="14" width="16" height="2" fill="#0a8397"/><path d="M2,12.5 L2,11.3 L5.9,7.2 L8.6,10 L10,9 Q12,8.3 13.9,10.6 L13.9,12.5 Z" fill="#0a8397"/><rect x="9.2" y="3" width="2.9" height="2.9" fill="#0a8397"/></svg><span class="t" style="left:733.4px;top:466.8px;font-size:12px;color:#000;transform:scaleX(0.940);">0x1f1ec1f1e7.png</span><svg class="a" style="left:715px;top:484.1px;" width="16" height="16" viewBox="0 0 16 16"><rect x="0.5" y="0.5" width="15" height="14.5" fill="#fff" stroke="#0a8397"/><rect x="0" y="14" width="16" height="2" fill="#0a8397"/><path d="M2,12.5 L2,11.3 L5.9,7.2 L8.6,10 L10,9 Q12,8.3 13.9,10.6 L13.9,12.5 Z" fill="#0a8397"/><rect x="9.2" y="3" width="2.9" height="2.9" fill="#0a8397"/></svg><span class="t" style="left:733.4px;top:485.8px;font-size:12px;color:#000;transform:scaleX(0.940);">0x1f1ee1f1f9.png</span><svg class="a" style="left:715px;top:503.09999999999997px;" width="16" height="16" viewBox="0 0 16 16"><rect x="0.5" y="0.5" width="15" height="14.5" fill="#fff" stroke="#0a8397"/><rect x="0" y="14" width="16" height="2" fill="#0a8397"/><path d="M2,12.5 L2,11.3 L5.9,7.2 L8.6,10 L10,9 Q12,8.3 13.9,10.6 L13.9,12.5 Z" fill="#0a8397"/><rect x="9.2" y="3" width="2.9" height="2.9" fill="#0a8397"/></svg><span class="t" style="left:733.4px;top:504.8px;font-size:12px;color:#000;transform:scaleX(0.940);">0x1f1ef1f1f5.png</span><svg class="a" style="left:715px;top:522.0999999999999px;" width="16" height="16" viewBox="0 0 16 16"><rect x="0.5" y="0.5" width="15" height="14.5" fill="#fff" stroke="#0a8397"/><rect x="0" y="14" width="16" height="2" fill="#0a8397"/><path d="M2,12.5 L2,11.3 L5.9,7.2 L8.6,10 L10,9 Q12,8.3 13.9,10.6 L13.9,12.5 Z" fill="#0a8397"/><rect x="9.2" y="3" width="2.9" height="2.9" fill="#0a8397"/></svg><span class="t" style="left:733.4px;top:523.8px;font-size:12px;color:#000;transform:scaleX(0.940);">0x1f1f01f1f7.png</span><svg class="a" style="left:715px;top:541.0999999999999px;" width="16" height="16" viewBox="0 0 16 16"><rect x="0.5" y="0.5" width="15" height="14.5" fill="#fff" stroke="#0a8397"/><rect x="0" y="14" width="16" height="2" fill="#0a8397"/><path d="M2,12.5 L2,11.3 L5.9,7.2 L8.6,10 L10,9 Q12,8.3 13.9,10.6 L13.9,12.5 Z" fill="#0a8397"/><rect x="9.2" y="3" width="2.9" height="2.9" fill="#0a8397"/></svg><span class="t" style="left:733.4px;top:542.8px;font-size:12px;color:#000;transform:scaleX(0.940);">0x1f1f71f1fa.png</span><svg class="a" style="left:715px;top:560.0999999999999px;" width="16" height="16" viewBox="0 0 16 16"><rect x="0.5" y="0.5" width="15" height="14.5" fill="#fff" stroke="#0a8397"/><rect x="0" y="14" width="16" height="2" fill="#0a8397"/><path d="M2,12.5 L2,11.3 L5.9,7.2 L8.6,10 L10,9 Q12,8.3 13.9,10.6 L13.9,12.5 Z" fill="#0a8397"/><rect x="9.2" y="3" width="2.9" height="2.9" fill="#0a8397"/></svg><span class="t" style="left:733.4px;top:561.8px;font-size:12px;color:#000;transform:scaleX(0.940);">0x1f1fa1f1f8.png</span><svg class="a" style="left:715px;top:579.0999999999999px;" width="16" height="16" viewBox="0 0 16 16"><rect x="0.5" y="0.5" width="15" height="14.5" fill="#fff" stroke="#0a8397"/><rect x="0" y="14" width="16" height="2" fill="#0a8397"/><path d="M2,12.5 L2,11.3 L5.9,7.2 L8.6,10 L10,9 Q12,8.3 13.9,10.6 L13.9,12.5 Z" fill="#0a8397"/><rect x="9.2" y="3" width="2.9" height="2.9" fill="#0a8397"/></svg><span class="t" style="left:733.4px;top:580.8px;font-size:12px;color:#000;transform:scaleX(0.940);">0x1f3a0.png</span><svg class="a" style="left:715px;top:598.0999999999999px;" width="16" height="16" viewBox="0 0 16 16"><rect x="0.5" y="0.5" width="15" height="14.5" fill="#fff" stroke="#0a8397"/><rect x="0" y="14" width="16" height="2" fill="#0a8397"/><path d="M2,12.5 L2,11.3 L5.9,7.2 L8.6,10 L10,9 Q12,8.3 13.9,10.6 L13.9,12.5 Z" fill="#0a8397"/><rect x="9.2" y="3" width="2.9" height="2.9" fill="#0a8397"/></svg><span class="t" style="left:733.4px;top:599.8px;font-size:12px;color:#000;transform:scaleX(0.940);">0x1f3a1.png</span><svg class="a" style="left:715px;top:617.0999999999999px;" width="16" height="16" viewBox="0 0 16 16"><rect x="0.5" y="0.5" width="15" height="14.5" fill="#fff" stroke="#0a8397"/><rect x="0" y="14" width="16" height="2" fill="#0a8397"/><path d="M2,12.5 L2,11.3 L5.9,7.2 L8.6,10 L10,9 Q12,8.3 13.9,10.6 L13.9,12.5 Z" fill="#0a8397"/><rect x="9.2" y="3" width="2.9" height="2.9" fill="#0a8397"/></svg><span class="t" style="left:733.4px;top:618.8px;font-size:12px;color:#000;transform:scaleX(0.940);">0x1f3a2.png</span><svg class="a" style="left:715px;top:636.0999999999999px;" width="16" height="16" viewBox="0 0 16 16"><rect x="0.5" y="0.5" width="15" height="14.5" fill="#fff" stroke="#0a8397"/><rect x="0" y="14" width="16" height="2" fill="#0a8397"/><path d="M2,12.5 L2,11.3 L5.9,7.2 L8.6,10 L10,9 Q12,8.3 13.9,10.6 L13.9,12.5 Z" fill="#0a8397"/><rect x="9.2" y="3" width="2.9" height="2.9" fill="#0a8397"/></svg><span class="t" style="left:733.4px;top:637.8px;font-size:12px;color:#000;transform:scaleX(0.940);">0x1f3a3.png</span><svg class="a" style="left:715px;top:655.0999999999999px;" width="16" height="16" viewBox="0 0 16 16"><rect x="0.5" y="0.5" width="15" height="14.5" fill="#fff" stroke="#0a8397"/><rect x="0" y="14" width="16" height="2" fill="#0a8397"/><path d="M2,12.5 L2,11.3 L5.9,7.2 L8.6,10 L10,9 Q12,8.3 13.9,10.6 L13.9,12.5 Z" fill="#0a8397"/><rect x="9.2" y="3" width="2.9" height="2.9" fill="#0a8397"/></svg><span class="t" style="left:733.4px;top:656.8px;font-size:12px;color:#000;transform:scaleX(0.940);">0x1f3a4.png</span><div class="a " style="left:926px;top:117px;width:16px;height:556px;background:#f0f0f0;"></div><svg class="a" style="left:929px;top:122.5px;" width="10" height="8" viewBox="0 0 10 8"><path d="M1.2,6.2 L5,2.2 L8.8,6.2" stroke="#505050" stroke-width="1.9" fill="none"/></svg><svg class="a" style="left:929px;top:660px;" width="10" height="8" viewBox="0 0 10 8"><path d="M1.2,1.8 L5,5.8 L8.8,1.8" stroke="#505050" stroke-width="1.9" fill="none"/></svg><div class="a " style="left:926px;top:134px;width:16px;height:17px;background:#cdcdcd;"></div><div class="a " style="left:707px;top:673px;width:235px;height:16px;background:#f0f0f0;"></div><svg class="a" style="left:711px;top:676px;" width="8" height="10" viewBox="0 0 8 10"><path d="M6.2,1.2 L2.2,5 L6.2,8.8" stroke="#505050" stroke-width="1.9" fill="none"/></svg><svg class="a" style="left:913px;top:676px;" width="8" height="10" viewBox="0 0 8 10"><path d="M1.8,1.2 L5.8,5 L1.8,8.8" stroke="#505050" stroke-width="1.9" fill="none"/></svg><div class="a " style="left:724px;top:673px;width:41px;height:16px;background:#cdcdcd;"></div><svg class="a" style="left:930px;top:678px;" width="10" height="10" viewBox="0 0 10 10"><g fill="#bdbdbd"><rect x="6.6" y="1" width="1.6" height="1.6"/><rect x="3.8" y="3.8" width="1.6" height="1.6"/><rect x="6.6" y="3.8" width="1.6" height="1.6"/><rect x="1" y="6.6" width="1.6" height="1.6"/><rect x="3.8" y="6.6" width="1.6" height="1.6"/><rect x="6.6" y="6.6" width="1.6" height="1.6"/></g></svg></div></div><div class="a " style="left:105px;top:668px;width:598px;height:21px;background:#f2f2f2;"></div><div class="a " style="left:105px;top:668px;width:598px;height:1px;background:#dcdcdc;"></div><svg class="a" style="left:404px;top:669px" width="68" height="22" viewBox="404 669 68 22"><text class="g" y="684.4" font-size="13" fill="#000"><tspan x="406.1">无</tspan><tspan x="425.7">未连接</tspan></text></svg><span class="t" style="left:419.1px;top:672.8px;font-size:12px;color:#000;transform:scaleX(0.990);">: </span><div class="a " style="left:402px;top:669px;width:1px;height:20px;background:#c8c8c8;"></div><div class="a " style="left:105px;top:670px;width:1px;height:19px;background:#c4c4c4;"></div><div class="a " style="left:167px;top:670px;width:1px;height:19px;background:#c4c4c4;"></div><div class="a " style="left:217px;top:670px;width:1px;height:19px;background:#c4c4c4;"></div><div class="a " style="left:312px;top:670px;width:1px;height:19px;background:#c4c4c4;"></div><div class="a " style="left:358px;top:670px;width:1px;height:19px;background:#c4c4c4;"></div><svg class="a" style="left:113.6px;top:672.2px;" width="12" height="14" viewBox="0 0 12 14"><g><rect x="0" y="0" width="10.8" height="13.6" fill="#fbbd1f"/><rect x="1" y="1" width="8.8" height="11.6" fill="#fbeb70"/><rect x="9.6" y="0" width="2" height="6.8" fill="#fbaa18"/></g></svg><span class="t" style="left:133.6px;top:673.0px;font-size:12px;color:#000;transform:scaleX(0.930);">0 / 4</span><div class="a " style="left:168.5px;top:673.4px;width:12px;height:13px;background:#fff;border:1px solid #555;box-sizing:border-box;"></div><span class="t" style="left:189.0px;top:673.0px;font-size:12px;color:#000;transform:scaleX(0.930);">0 / 6</span><svg class="a" style="left:222px;top:669px" width="85" height="22" viewBox="222 669 85 22"><text class="g" x="234.08" y="684.5" font-size="13" fill="#e6001e">个隐藏文件</text></svg><span class="t" style="left:224.0px;top:672.5px;font-size:13px;color:#e6001e;transform:scaleX(0.930);">2 </span><span class="t" style="left:317.0px;top:673.0px;font-size:12px;color:#000;transform:scaleX(0.930);">7.55 GB</span><div class="a " style="left:362px;top:676px;width:11px;height:10px;background:#1a7a8a;"></div><div class="a " style="left:0px;top:689px;width:943px;height:1px;background:#a6a6a6;"></div><div class="a " style="left:942px;top:31px;width:1px;height:659px;background:#a6a6a6;"></div><div class="a " style="left:0px;top:31px;width:1px;height:659px;background:#bdbdbd;"></div><div class="a " style="left:30px;top:237px;width:363px;height:444.6px;background:#f0f0f0;box-shadow:0 1px 10px 1px rgba(0,0,0,0.32);"></div><div class="a " style="left:30px;top:237px;width:363px;height:26px;background:#e6e6e6;"></div><span class="t" style="left:39.1px;top:242.6px;font-size:12px;color:#000;transform:scaleX(0.955);">0x00a9.png Properties</span><svg class="a" style="left:371px;top:242px;" width="12" height="12" viewBox="0 0 12 12"><path d="M1,1 L11,11 M11,1 L1,11" stroke="#111" stroke-width="1.2" fill="none"/></svg><div class="a " style="left:37px;top:290px;width:348px;height:354px;background:#fff;border:1px solid #adadad;box-sizing:border-box;"></div><div class="a " style="left:37px;top:270px;width:53px;height:21px;background:#fff;border:1px solid #adadad;border-bottom:none;box-sizing:border-box;"></div><span class="t" style="left:44.8px;top:273.6px;font-size:11px;color:#000;transform:scaleX(0.933);">General</span><svg class="a" style="left:52px;top:303px;" width="32" height="33" viewBox="0 0 32 33"><rect width="32" height="33" fill="#00809a"/><rect x="4" y="4" width="24.5" height="25" fill="#fff"/><rect x="6.2" y="6.2" width="20" height="19" fill="#00809a"/><path d="M7.3,24 V21 L11,16.5 L12,15.5 L13,16.5 L17.5,21.5 L19.5,20.5 L21.5,19.8 L24.5,21 L25,24 Z" fill="#fff"/><rect x="18.3" y="10" width="3.2" height="3.2" fill="#fff"/><g fill="#fff"><rect x="19.5" y="7.8" width="0.9" height="1.2"/><rect x="19.5" y="14.2" width="0.9" height="1.2"/><rect x="16.2" y="11.2" width="1.2" height="0.9"/><rect x="22.4" y="11.2" width="1.2" height="0.9"/><rect x="17" y="8.6" width="0.9" height="0.9"/><rect x="22" y="8.6" width="0.9" height="0.9"/><rect x="17" y="13.6" width="0.9" height="0.9"/><rect x="22" y="13.6" width="0.9" height="0.9"/></g></svg><div class="a " style="left:125px;top:310px;width:247px;height:23px;background:#fff;border:1px solid #4d94e6;box-sizing:border-box;"></div><div class="a " style="left:129px;top:313px;width:58px;height:13px;background:#3399ff;"></div><span class="t" style="left:129.6px;top:314.0px;font-size:11px;color:#fff;transform:scaleX(0.988);">0x00a9.png</span><div class="a " style="left:187px;top:313px;width:1px;height:13px;background:#b84a10;"></div><div class="a " style="left:52px;top:344px;width:318px;height:1px;background:#a0a0a0;"></div><div class="a " style="left:52px;top:409px;width:318px;height:1px;background:#a0a0a0;"></div><div class="a " style="left:52px;top:500px;width:318px;height:1px;background:#a0a0a0;"></div><div class="a " style="left:52px;top:591px;width:318px;height:1px;background:#a0a0a0;"></div><span class="t" style="left:51.9px;top:357.8px;font-size:11px;color:#000;transform:scaleX(1.015);">Type of file:</span><span class="t" style="left:125.9px;top:357.8px;font-size:11px;color:#000;transform:scaleX(0.872);">PNG File</span><span class="t" style="left:51.9px;top:383.8px;font-size:11px;color:#000;transform:scaleX(0.972);">Modified:</span><span class="t" style="left:125.9px;top:383.8px;font-size:11px;color:#000;transform:scaleX(1.009);">2013/4/24 15:00</span><span class="t" style="left:51.9px;top:423.0px;font-size:11px;color:#000;transform:scaleX(0.963);">Location:</span><span class="t" style="left:125.9px;top:423.0px;font-size:11px;color:#000;transform:scaleX(0.988);">emoji/</span><span class="t" style="left:51.9px;top:449.0px;font-size:11px;color:#000;transform:scaleX(0.896);">Size:</span><span class="t" style="left:126.3px;top:449.0px;font-size:11px;color:#000;transform:scaleX(0.813);">1 KB</span><span class="t" style="left:51.9px;top:475.0px;font-size:11px;color:#000;transform:scaleX(0.954);">Compressed:</span><span class="t" style="left:126.3px;top:475.0px;font-size:11px;color:#000;transform:scaleX(0.813);">1 KB</span><span class="t" style="left:51.9px;top:514.0px;font-size:11px;color:#000;transform:scaleX(0.989);">Method:</span><span class="t" style="left:125.9px;top:514.0px;font-size:11px;color:#000;transform:scaleX(0.969);">Stored</span><span class="t" style="left:51.9px;top:540.0px;font-size:11px;color:#000;transform:scaleX(0.937);">CRC-32:</span><span class="t" style="left:125.9px;top:540.0px;font-size:11px;color:#000;transform:scaleX(0.914);">331F7B8B</span><span class="t" style="left:51.9px;top:566.0px;font-size:11px;color:#000;transform:scaleX(1.035);">Index:</span><span class="t" style="left:126.3px;top:566.0px;font-size:11px;color:#000;transform:scaleX(0.900);">1</span><span class="t" style="left:51.9px;top:604.6px;font-size:11px;color:#000;transform:scaleX(1.028);">Attributes:</span><div class="a " style="left:125px;top:605px;width:13px;height:13px;background:#e6e6e6;border:1px solid #bcbcbc;box-sizing:border-box;"></div><span class="t" style="left:141.0px;top:605.2px;font-size:11px;color:#838383;transform:scaleX(0.955);">Read-only</span><div class="a " style="left:205px;top:605px;width:13px;height:13px;background:#e6e6e6;border:1px solid #bcbcbc;box-sizing:border-box;"></div><span class="t" style="left:220.6px;top:605.2px;font-size:11px;color:#838383;transform:scaleX(0.955);">Hidden</span><div class="a " style="left:284px;top:605px;width:13px;height:13px;background:#e6e6e6;border:1px solid #bcbcbc;box-sizing:border-box;"></div><span class="t" style="left:299.4px;top:605.2px;font-size:11px;color:#838383;transform:scaleX(0.955);">System</span><div class="a " style="left:231px;top:652px;width:73px;height:21px;background:#e1e1e1;border:1px solid #1a82dc;box-sizing:border-box;box-shadow:inset 0 0 0 1px rgba(0,120,215,0.35);"></div><span class="t" style="left:259.7px;top:656.4px;font-size:11px;color:#000;transform:scaleX(0.893);">OK</span><div class="a " style="left:312px;top:652px;width:73px;height:21px;background:#e1e1e1;border:1px solid #adadad;box-sizing:border-box;"></div><span class="t" style="left:331.6px;top:656.4px;font-size:11px;color:#000;transform:scaleX(0.923);">Cancel</span>
</div></body></html>
